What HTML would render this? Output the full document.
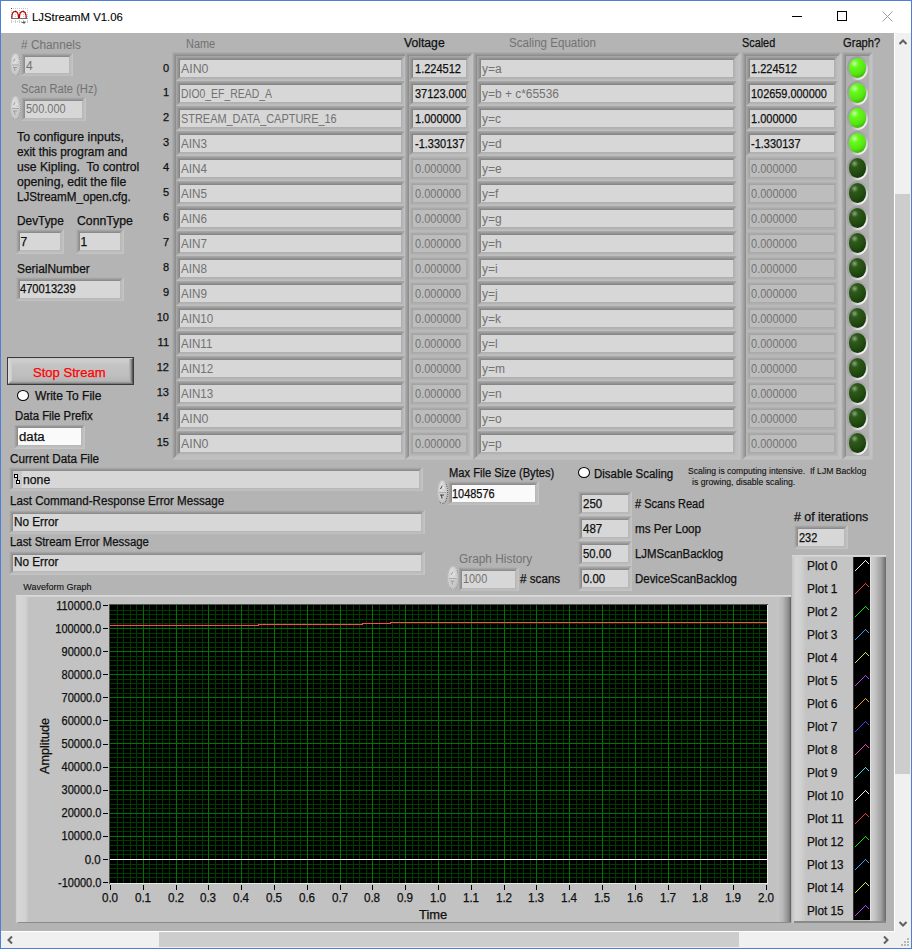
<!DOCTYPE html>
<html><head><meta charset="utf-8"><style>
html,body{margin:0;padding:0;width:912px;height:949px;overflow:hidden;background:#fff}
body>div,body>svg{position:absolute}
.f{height:100%;box-sizing:border-box}
.t{position:absolute;white-space:nowrap;line-height:1;font-family:"Liberation Sans",sans-serif;-webkit-text-stroke:0.25px currentColor}
</style></head><body>
<div style="left:0px;top:0px;width:912px;height:949px;background:#ffffff"></div>
<div style="left:1px;top:33px;width:893px;height:898px;background:#b4b4b4"></div>
<div style="left:895px;top:33px;width:16px;height:915px;background:#f0f0f0"></div>
<div style="left:1px;top:932px;width:910px;height:16px;background:#f0f0f0"></div>
<div style="left:895px;top:194px;width:15px;height:580px;background:#cdcdcd"></div>
<div style="left:159px;top:932px;width:580px;height:15px;background:#cdcdcd"></div>
<svg style="left:895px;top:33px" width="16" height="16"><path d="M4.5 11 L8 7.5 L11.5 11" stroke="#606060" stroke-width="2" fill="none"/></svg>
<svg style="left:895px;top:915px" width="16" height="16"><path d="M4.5 7 L8 10.5 L11.5 7" stroke="#606060" stroke-width="2" fill="none"/></svg>
<svg style="left:1px;top:932px" width="16" height="16"><path d="M11 4.5 L7.5 8 L11 11.5" stroke="#606060" stroke-width="2" fill="none"/></svg>
<svg style="left:878px;top:932px" width="16" height="16"><path d="M6 4.5 L9.5 8 L6 11.5" stroke="#606060" stroke-width="2" fill="none"/></svg>
<div style="left:907px;top:938px;width:2px;height:2px;background:#b8b8b8"></div>
<div style="left:904px;top:941px;width:2px;height:2px;background:#b8b8b8"></div>
<div style="left:907px;top:941px;width:2px;height:2px;background:#b8b8b8"></div>
<div style="left:901px;top:944px;width:2px;height:2px;background:#b8b8b8"></div>
<div style="left:904px;top:944px;width:2px;height:2px;background:#b8b8b8"></div>
<div style="left:907px;top:944px;width:2px;height:2px;background:#b8b8b8"></div>
<div style="left:0px;top:0px;width:912px;height:1px;background:#4a80d6"></div>
<div style="left:0px;top:948px;width:912px;height:1px;background:#4a80d6"></div>
<div style="left:0px;top:0px;width:1px;height:949px;background:#4a80d6"></div>
<div style="left:911px;top:0px;width:1px;height:949px;background:#4a80d6"></div>
<svg style="left:10px;top:7px" width="19" height="19">
<g stroke="#c8c8c8" stroke-width="1" stroke-dasharray="1 1" shape-rendering="crispEdges">
<line x1="1.5" y1="1" x2="1.5" y2="17"/><line x1="5.5" y1="1" x2="5.5" y2="17"/><line x1="9.5" y1="1" x2="9.5" y2="17"/><line x1="13.5" y1="1" x2="13.5" y2="17"/><line x1="17.5" y1="1" x2="17.5" y2="17"/>
<line x1="1" y1="1.5" x2="18" y2="1.5"/><line x1="1" y1="5.5" x2="18" y2="5.5"/><line x1="1" y1="14.5" x2="18" y2="14.5"/>
</g>
<rect x="1" y="1" width="1" height="1" fill="#404040"/>
<line x1="1" y1="11.5" x2="17.5" y2="11.5" stroke="#707070" stroke-width="1"/>
<path d="M1.8 11 C1.8 2.2 8.6 2.2 8.6 11 M9.4 11 C9.4 2.2 16.2 2.2 16.2 11" stroke="#c00000" stroke-width="1.25" fill="none"/>
<path d="M8.1 11 L9 8.5 L9.9 11 Z" fill="#c00000"/>
<path d="M11.5 15.5 L15 15.5 M13.5 14 L15 15.5 L13.5 17" stroke="#505050" stroke-width="0.9" fill="none"/>
</svg>
<div class="t" style="left:31.60px;top:11.00px;font-size:11.7px;color:#000000;transform-origin:0 0;transform:scaleX(0.9706);-webkit-text-stroke:0.1px #000;">LJStreamM V1.06</div>
<div style="left:792px;top:16px;width:10px;height:1px;background:#000"></div>
<div style="left:837px;top:11px;width:10px;height:10px;box-sizing:border-box;border:1px solid #000"></div>
<svg style="left:882px;top:11px" width="11" height="11"><path d="M0.5 0.5 L10.5 10.5 M10.5 0.5 L0.5 10.5" stroke="#a0a0a0" stroke-width="1" fill="none"/></svg>
<div class="t" style="left:21.30px;top:39.00px;font-size:12px;color:#727272;transform-origin:0 0;transform:scaleX(0.9868);-webkit-text-stroke:0;"># Channels</div>
<div style="left:21px;top:53px;width:52px;height:23px"><div class="f" style="border-style:solid;border-width:1px 1px 1px 1px;border-color:#b0b0b0 #c4c4c4 #c0c0c0 #b0b0b0"><div class="f" style="border-style:solid;border-width:1px 1px 1px 1px;border-color:#a4a4a4 #c0c0c0 #bcbcbc #a4a4a4"><div class="f" style="border-style:solid;border-width:1px 1px 1px 1px;border-color:#989898 #bcbcbc #b8b8b8 #989898"><div class="f" style="border-style:solid;border-width:1px 1px 0 1px;border-color:#8c8c8c #b8b8b8 transparent #8c8c8c"><div class="f" style="background:#d7d7d7"></div></div></div></div></div></div>
<div style="left:10px;top:53px;width:11px;height:23px;border-radius:50%;box-sizing:border-box;border-width:1px;border-style:solid dotted dotted solid;border-color:#c4c4c4 #8e8e8e #8e8e8e #bcbcbc;background:radial-gradient(ellipse at 40% 30%, #e2e2e2 0%, #cdcdcd 50%, #b8b8b8 100%)"></div>
<svg style="left:10px;top:53px" width="11" height="23"><line x1="2" y1="11.0" x2="9" y2="11.0" stroke="#dadada" stroke-width="1"/><line x1="2" y1="12.0" x2="9" y2="12.0" stroke="#a8a8a8" stroke-width="1"/><path d="M3.5 8.5 L5.5 5.0" stroke="#9a9a9a" fill="none" stroke-width="1"/><path d="M5.5 5.0 L7.5 8.5" stroke="#e8e8e8" fill="none" stroke-width="1"/><path d="M3.0 14.5 L7.0 14.5 M4.5 14.5 L5.0 18.0" stroke="#9a9a9a" fill="none" stroke-width="1"/></svg>
<div class="t" style="left:26.00px;top:60.00px;font-size:12px;color:#727272;transform-origin:0 0;-webkit-text-stroke:0;">4</div>
<div class="t" style="left:21.30px;top:83.00px;font-size:12px;color:#727272;transform-origin:0 0;transform:scaleX(0.9287);-webkit-text-stroke:0;">Scan Rate (Hz)</div>
<div style="left:21px;top:97px;width:65px;height:24px"><div class="f" style="border-style:solid;border-width:1px 1px 1px 1px;border-color:#b0b0b0 #c4c4c4 #c0c0c0 #b0b0b0"><div class="f" style="border-style:solid;border-width:1px 1px 1px 1px;border-color:#a4a4a4 #c0c0c0 #bcbcbc #a4a4a4"><div class="f" style="border-style:solid;border-width:1px 1px 1px 1px;border-color:#989898 #bcbcbc #b8b8b8 #989898"><div class="f" style="border-style:solid;border-width:1px 1px 0 1px;border-color:#8c8c8c #b8b8b8 transparent #8c8c8c"><div class="f" style="background:#d7d7d7"></div></div></div></div></div></div>
<div style="left:10px;top:96px;width:11px;height:24px;border-radius:50%;box-sizing:border-box;border-width:1px;border-style:solid dotted dotted solid;border-color:#c4c4c4 #8e8e8e #8e8e8e #bcbcbc;background:radial-gradient(ellipse at 40% 30%, #e2e2e2 0%, #cdcdcd 50%, #b8b8b8 100%)"></div>
<svg style="left:10px;top:96px" width="11" height="24"><line x1="2" y1="11.5" x2="9" y2="11.5" stroke="#dadada" stroke-width="1"/><line x1="2" y1="12.5" x2="9" y2="12.5" stroke="#a8a8a8" stroke-width="1"/><path d="M3.5 9.0 L5.5 5.5" stroke="#9a9a9a" fill="none" stroke-width="1"/><path d="M5.5 5.5 L7.5 9.0" stroke="#e8e8e8" fill="none" stroke-width="1"/><path d="M3.0 15.0 L7.0 15.0 M4.5 15.0 L5.0 18.5" stroke="#9a9a9a" fill="none" stroke-width="1"/></svg>
<div class="t" style="left:25.70px;top:103.00px;font-size:12px;color:#727272;transform-origin:0 0;transform:scaleX(0.9124);-webkit-text-stroke:0;">500.000</div>
<div class="t" style="left:16.70px;top:131.00px;font-size:12px;color:#101010;transform-origin:0 0;transform:scaleX(1.0264);">To configure inputs,</div>
<div class="t" style="left:16.70px;top:146.00px;font-size:12px;color:#101010;transform-origin:0 0;transform:scaleX(0.9835);">exit this program and</div>
<div class="t" style="left:16.70px;top:161.00px;font-size:12px;color:#101010;transform-origin:0 0;transform:scaleX(1.0141);">use Kipling.&nbsp; To control</div>
<div class="t" style="left:16.70px;top:176.00px;font-size:12px;color:#101010;transform-origin:0 0;transform:scaleX(1.0168);">opening, edit the file</div>
<div class="t" style="left:16.70px;top:191.00px;font-size:12px;color:#101010;transform-origin:0 0;transform:scaleX(0.9693);">LJStreamM_open.cfg.</div>
<div class="t" style="left:16.70px;top:215.00px;font-size:12px;color:#101010;transform-origin:0 0;transform:scaleX(0.9884);">DevType</div>
<div class="t" style="left:76.70px;top:215.00px;font-size:12px;color:#101010;transform-origin:0 0;transform:scaleX(1.0201);">ConnType</div>
<div style="left:16px;top:229px;width:48px;height:25px"><div class="f" style="border-style:solid;border-width:1px 1px 1px 1px;border-color:#b0b0b0 #c4c4c4 #c4c4c4 #b0b0b0"><div class="f" style="border-style:solid;border-width:1px 1px 1px 1px;border-color:#a4a4a4 #c0c0c0 #c0c0c0 #a4a4a4"><div class="f" style="border-style:solid;border-width:1px 1px 1px 1px;border-color:#989898 #bcbcbc #bcbcbc #989898"><div class="f" style="border-style:solid;border-width:1px 1px 1px 1px;border-color:#8c8c8c #b8b8b8 #b8b8b8 #8c8c8c"><div class="f" style="background:#d7d7d7"></div></div></div></div></div></div>
<div style="left:76px;top:229px;width:48px;height:25px"><div class="f" style="border-style:solid;border-width:1px 1px 1px 1px;border-color:#b0b0b0 #c4c4c4 #c4c4c4 #b0b0b0"><div class="f" style="border-style:solid;border-width:1px 1px 1px 1px;border-color:#a4a4a4 #c0c0c0 #c0c0c0 #a4a4a4"><div class="f" style="border-style:solid;border-width:1px 1px 1px 1px;border-color:#989898 #bcbcbc #bcbcbc #989898"><div class="f" style="border-style:solid;border-width:1px 1px 1px 1px;border-color:#8c8c8c #b8b8b8 #b8b8b8 #8c8c8c"><div class="f" style="background:#d7d7d7"></div></div></div></div></div></div>
<div class="t" style="left:20.60px;top:236.00px;font-size:12px;color:#101010;transform-origin:0 0;">7</div>
<div class="t" style="left:80.60px;top:236.00px;font-size:12px;color:#101010;transform-origin:0 0;">1</div>
<div class="t" style="left:16.70px;top:263.00px;font-size:12px;color:#101010;transform-origin:0 0;transform:scaleX(0.9925);">SerialNumber</div>
<div style="left:16px;top:277px;width:108px;height:24px"><div class="f" style="border-style:solid;border-width:1px 1px 1px 1px;border-color:#b0b0b0 #c4c4c4 #c0c0c0 #b0b0b0"><div class="f" style="border-style:solid;border-width:1px 1px 1px 1px;border-color:#a4a4a4 #c0c0c0 #bcbcbc #a4a4a4"><div class="f" style="border-style:solid;border-width:1px 1px 1px 1px;border-color:#989898 #bcbcbc #b8b8b8 #989898"><div class="f" style="border-style:solid;border-width:1px 1px 0 1px;border-color:#8c8c8c #b8b8b8 transparent #8c8c8c"><div class="f" style="background:#d7d7d7"></div></div></div></div></div></div>
<div class="t" style="left:19.90px;top:283.00px;font-size:12px;color:#101010;transform-origin:0 0;transform:scaleX(0.9259);">470013239</div>
<div style="left:7px;top:357px;width:127px;height:28px;background:#3a3a3a"></div>
<div style="left:8px;top:358px;width:125px;height:26px"><div class="f" style="border-style:solid;border-width:1px 1px 1px 1px;border-color:#c8c8c8 #5a5a5a #7a7a7a #dadada"><div class="f" style="border-style:solid;border-width:0 1px 1px 1px;border-color:transparent #808080 #9a9a9a #d6d6d6"><div class="f" style="border-style:solid;border-width:0 1px 1px 1px;border-color:transparent #a0a0a0 #acacac #d2d2d2"><div class="f" style="border-style:solid;border-width:0 1px 0 1px;border-color:transparent #b4b4b4 transparent #cccccc"><div class="f" style="background:linear-gradient(#d0d0d0,#c4c4c4 30%,#bebebe 75%,#b6b6b6)"></div></div></div></div></div></div>
<div class="t" style="left:33.30px;top:367.00px;font-size:12.5px;color:#ff0000;transform-origin:0 0;transform:scaleX(1.0439);">Stop Stream</div>
<div style="left:17px;top:390px;width:12px;height:11px;box-sizing:border-box;border:1px solid #000;border-radius:50%;background:#fff"></div>
<div class="t" style="left:34.70px;top:390.00px;font-size:12px;color:#101010;transform-origin:0 0;transform:scaleX(1.0038);">Write To File</div>
<div class="t" style="left:14.90px;top:410.00px;font-size:12px;color:#101010;transform-origin:0 0;transform:scaleX(0.9458);">Data File Prefix</div>
<div style="left:14px;top:425px;width:71px;height:24px"><div class="f" style="border-style:solid;border-width:1px 1px 1px 1px;border-color:#a4a4a4 #c4c4c4 #c4c4c4 #b0b0b0"><div class="f" style="border-style:solid;border-width:1px 1px 1px 1px;border-color:#989898 #c0c0c0 #c0c0c0 #a4a4a4"><div class="f" style="border-style:solid;border-width:1px 1px 1px 1px;border-color:#8c8c8c #bcbcbc #bcbcbc #989898"><div class="f" style="border-style:solid;border-width:0 1px 1px 1px;border-color:transparent #b8b8b8 #b8b8b8 #8c8c8c"><div class="f" style="background:#fafafa"></div></div></div></div></div></div>
<div class="t" style="left:19.00px;top:431.00px;font-size:12px;color:#101010;transform-origin:0 0;transform:scaleX(1.0983);">data</div>
<div class="t" style="left:9.70px;top:453.00px;font-size:12px;color:#101010;transform-origin:0 0;transform:scaleX(0.9743);">Current Data File</div>
<div style="left:9px;top:467px;width:414px;height:24px"><div class="f" style="border-style:solid;border-width:1px 1px 1px 1px;border-color:#b0b0b0 #c4c4c4 #c0c0c0 #b0b0b0"><div class="f" style="border-style:solid;border-width:1px 1px 1px 1px;border-color:#a4a4a4 #c0c0c0 #bcbcbc #a4a4a4"><div class="f" style="border-style:solid;border-width:1px 1px 1px 1px;border-color:#989898 #bcbcbc #b8b8b8 #989898"><div class="f" style="border-style:solid;border-width:1px 1px 0 1px;border-color:#8c8c8c #b8b8b8 transparent #8c8c8c"><div class="f" style="background:#d7d7d7"></div></div></div></div></div></div>
<div style="left:13px;top:471px;width:9px;height:17px;background:#c8c8c8"></div>
<div style="left:14px;top:474px;width:4px;height:4px;background:#000"></div>
<div style="left:15px;top:475px;width:2px;height:2px;background:#fff"></div>
<div style="left:16px;top:480px;width:4px;height:4px;background:#000"></div>
<div style="left:17px;top:481px;width:2px;height:2px;background:#fff"></div>
<div style="left:17px;top:478px;width:1px;height:2px;background:#000"></div>
<div class="t" style="left:22.90px;top:474.00px;font-size:12px;color:#101010;transform-origin:0 0;transform:scaleX(1.0187);">none</div>
<div class="t" style="left:9.70px;top:495.00px;font-size:12px;color:#101010;transform-origin:0 0;transform:scaleX(0.9673);">Last Command-Response Error Message</div>
<div style="left:9px;top:510px;width:416px;height:24px"><div class="f" style="border-style:solid;border-width:1px 1px 1px 1px;border-color:#b0b0b0 #c4c4c4 #c0c0c0 #b0b0b0"><div class="f" style="border-style:solid;border-width:1px 1px 1px 1px;border-color:#a4a4a4 #c0c0c0 #bcbcbc #a4a4a4"><div class="f" style="border-style:solid;border-width:1px 1px 1px 1px;border-color:#989898 #bcbcbc #b8b8b8 #989898"><div class="f" style="border-style:solid;border-width:1px 1px 0 1px;border-color:#8c8c8c #b8b8b8 transparent #8c8c8c"><div class="f" style="background:#d7d7d7"></div></div></div></div></div></div>
<div class="t" style="left:13.90px;top:516.00px;font-size:12px;color:#101010;transform-origin:0 0;transform:scaleX(0.9791);">No Error</div>
<div class="t" style="left:9.70px;top:536.00px;font-size:12px;color:#101010;transform-origin:0 0;transform:scaleX(0.9468);">Last Stream Error Message</div>
<div style="left:9px;top:551px;width:416px;height:24px"><div class="f" style="border-style:solid;border-width:1px 1px 1px 1px;border-color:#b0b0b0 #c4c4c4 #c4c4c4 #b0b0b0"><div class="f" style="border-style:solid;border-width:1px 1px 1px 1px;border-color:#a4a4a4 #c0c0c0 #c0c0c0 #a4a4a4"><div class="f" style="border-style:solid;border-width:1px 1px 1px 1px;border-color:#989898 #bcbcbc #bcbcbc #989898"><div class="f" style="border-style:solid;border-width:1px 1px 1px 1px;border-color:#8c8c8c #b8b8b8 #b8b8b8 #8c8c8c"><div class="f" style="background:#d7d7d7"></div></div></div></div></div></div>
<div class="t" style="left:13.90px;top:556.00px;font-size:12px;color:#101010;transform-origin:0 0;transform:scaleX(0.9791);">No Error</div>
<div class="t" style="left:185.90px;top:38.00px;font-size:12px;color:#727272;transform-origin:0 0;transform:scaleX(0.9125);-webkit-text-stroke:0;">Name</div>
<div class="t" style="left:404.30px;top:37.00px;font-size:12px;color:#101010;transform-origin:0 0;transform:scaleX(1.0162);">Voltage</div>
<div class="t" style="left:508.90px;top:37.00px;font-size:12px;color:#727272;transform-origin:0 0;transform:scaleX(0.9661);-webkit-text-stroke:0;">Scaling Equation</div>
<div class="t" style="left:741.80px;top:37.00px;font-size:12px;color:#101010;transform-origin:0 0;transform:scaleX(0.9046);">Scaled</div>
<div class="t" style="left:843.00px;top:37.00px;font-size:12px;color:#101010;transform-origin:0 0;transform:scaleX(0.9288);">Graph?</div>
<div style="left:172px;top:52px;width:237px;height:408px"><div class="f" style="border-style:solid;border-width:1px 1px 1px 1px;border-color:#acacac #bcbcbc #bcbcbc #acacac"><div class="f" style="border-style:solid;border-width:1px 1px 1px 1px;border-color:#a2a2a2 #c2c2c2 #c2c2c2 #a2a2a2"><div class="f" style="border-style:solid;border-width:1px 1px 1px 1px;border-color:#989898 #c0c0c0 #c0c0c0 #989898"><div class="f" style="border-style:solid;border-width:1px 1px 1px 1px;border-color:#8e8e8e #bebebe #bebebe #8e8e8e"><div class="f" style="background:#b4b4b4"></div></div></div></div></div></div>
<div style="left:405px;top:52px;width:69px;height:408px"><div class="f" style="border-style:solid;border-width:1px 1px 1px 1px;border-color:#acacac #bcbcbc #bcbcbc #acacac"><div class="f" style="border-style:solid;border-width:1px 1px 1px 1px;border-color:#a2a2a2 #c2c2c2 #c2c2c2 #a2a2a2"><div class="f" style="border-style:solid;border-width:1px 1px 1px 1px;border-color:#989898 #c0c0c0 #c0c0c0 #989898"><div class="f" style="border-style:solid;border-width:1px 1px 1px 1px;border-color:#8e8e8e #bebebe #bebebe #8e8e8e"><div class="f" style="background:#b4b4b4"></div></div></div></div></div></div>
<div style="left:473px;top:52px;width:268px;height:408px"><div class="f" style="border-style:solid;border-width:1px 1px 1px 1px;border-color:#acacac #bcbcbc #bcbcbc #acacac"><div class="f" style="border-style:solid;border-width:1px 1px 1px 1px;border-color:#a2a2a2 #c2c2c2 #c2c2c2 #a2a2a2"><div class="f" style="border-style:solid;border-width:1px 1px 1px 1px;border-color:#989898 #c0c0c0 #c0c0c0 #989898"><div class="f" style="border-style:solid;border-width:1px 1px 1px 1px;border-color:#8e8e8e #bebebe #bebebe #8e8e8e"><div class="f" style="background:#b4b4b4"></div></div></div></div></div></div>
<div style="left:742px;top:52px;width:100px;height:408px"><div class="f" style="border-style:solid;border-width:1px 1px 1px 1px;border-color:#acacac #bcbcbc #bcbcbc #acacac"><div class="f" style="border-style:solid;border-width:1px 1px 1px 1px;border-color:#a2a2a2 #c2c2c2 #c2c2c2 #a2a2a2"><div class="f" style="border-style:solid;border-width:1px 1px 1px 1px;border-color:#989898 #c0c0c0 #c0c0c0 #989898"><div class="f" style="border-style:solid;border-width:1px 1px 1px 1px;border-color:#8e8e8e #bebebe #bebebe #8e8e8e"><div class="f" style="background:#b4b4b4"></div></div></div></div></div></div>
<div style="left:176px;top:56px;width:229px;height:25px"><div class="f" style="border-style:solid;border-width:1px 1px 1px 1px;border-color:#a6a6a6 #bebebe #bebebe #a6a6a6"><div class="f" style="border-style:solid;border-width:1px 1px 1px 1px;border-color:#9c9c9c #bababa #bababa #9c9c9c"><div class="f" style="border-style:solid;border-width:1px 1px 1px 1px;border-color:#929292 #b4b4b4 #b4b4b4 #929292"><div class="f" style="border-style:solid;border-width:1px 1px 1px 1px;border-color:#868686 #b0b0b0 #b0b0b0 #868686"><div class="f" style="background:#d7d7d7"></div></div></div></div></div></div>
<div style="left:176px;top:81px;width:229px;height:25px"><div class="f" style="border-style:solid;border-width:1px 1px 1px 1px;border-color:#a6a6a6 #bebebe #bebebe #a6a6a6"><div class="f" style="border-style:solid;border-width:1px 1px 1px 1px;border-color:#9c9c9c #bababa #bababa #9c9c9c"><div class="f" style="border-style:solid;border-width:1px 1px 1px 1px;border-color:#929292 #b4b4b4 #b4b4b4 #929292"><div class="f" style="border-style:solid;border-width:1px 1px 1px 1px;border-color:#868686 #b0b0b0 #b0b0b0 #868686"><div class="f" style="background:#d7d7d7"></div></div></div></div></div></div>
<div style="left:176px;top:106px;width:229px;height:25px"><div class="f" style="border-style:solid;border-width:1px 1px 1px 1px;border-color:#a6a6a6 #bebebe #bebebe #a6a6a6"><div class="f" style="border-style:solid;border-width:1px 1px 1px 1px;border-color:#9c9c9c #bababa #bababa #9c9c9c"><div class="f" style="border-style:solid;border-width:1px 1px 1px 1px;border-color:#929292 #b4b4b4 #b4b4b4 #929292"><div class="f" style="border-style:solid;border-width:1px 1px 1px 1px;border-color:#868686 #b0b0b0 #b0b0b0 #868686"><div class="f" style="background:#d7d7d7"></div></div></div></div></div></div>
<div style="left:176px;top:131px;width:229px;height:25px"><div class="f" style="border-style:solid;border-width:1px 1px 1px 1px;border-color:#a6a6a6 #bebebe #bebebe #a6a6a6"><div class="f" style="border-style:solid;border-width:1px 1px 1px 1px;border-color:#9c9c9c #bababa #bababa #9c9c9c"><div class="f" style="border-style:solid;border-width:1px 1px 1px 1px;border-color:#929292 #b4b4b4 #b4b4b4 #929292"><div class="f" style="border-style:solid;border-width:1px 1px 1px 1px;border-color:#868686 #b0b0b0 #b0b0b0 #868686"><div class="f" style="background:#d7d7d7"></div></div></div></div></div></div>
<div style="left:176px;top:156px;width:229px;height:25px"><div class="f" style="border-style:solid;border-width:1px 1px 1px 1px;border-color:#a6a6a6 #bebebe #bebebe #a6a6a6"><div class="f" style="border-style:solid;border-width:1px 1px 1px 1px;border-color:#9c9c9c #bababa #bababa #9c9c9c"><div class="f" style="border-style:solid;border-width:1px 1px 1px 1px;border-color:#929292 #b4b4b4 #b4b4b4 #929292"><div class="f" style="border-style:solid;border-width:1px 1px 1px 1px;border-color:#868686 #b0b0b0 #b0b0b0 #868686"><div class="f" style="background:#d7d7d7"></div></div></div></div></div></div>
<div style="left:176px;top:181px;width:229px;height:25px"><div class="f" style="border-style:solid;border-width:1px 1px 1px 1px;border-color:#a6a6a6 #bebebe #bebebe #a6a6a6"><div class="f" style="border-style:solid;border-width:1px 1px 1px 1px;border-color:#9c9c9c #bababa #bababa #9c9c9c"><div class="f" style="border-style:solid;border-width:1px 1px 1px 1px;border-color:#929292 #b4b4b4 #b4b4b4 #929292"><div class="f" style="border-style:solid;border-width:1px 1px 1px 1px;border-color:#868686 #b0b0b0 #b0b0b0 #868686"><div class="f" style="background:#d7d7d7"></div></div></div></div></div></div>
<div style="left:176px;top:206px;width:229px;height:25px"><div class="f" style="border-style:solid;border-width:1px 1px 1px 1px;border-color:#a6a6a6 #bebebe #bebebe #a6a6a6"><div class="f" style="border-style:solid;border-width:1px 1px 1px 1px;border-color:#9c9c9c #bababa #bababa #9c9c9c"><div class="f" style="border-style:solid;border-width:1px 1px 1px 1px;border-color:#929292 #b4b4b4 #b4b4b4 #929292"><div class="f" style="border-style:solid;border-width:1px 1px 1px 1px;border-color:#868686 #b0b0b0 #b0b0b0 #868686"><div class="f" style="background:#d7d7d7"></div></div></div></div></div></div>
<div style="left:176px;top:231px;width:229px;height:25px"><div class="f" style="border-style:solid;border-width:1px 1px 1px 1px;border-color:#a6a6a6 #bebebe #bebebe #a6a6a6"><div class="f" style="border-style:solid;border-width:1px 1px 1px 1px;border-color:#9c9c9c #bababa #bababa #9c9c9c"><div class="f" style="border-style:solid;border-width:1px 1px 1px 1px;border-color:#929292 #b4b4b4 #b4b4b4 #929292"><div class="f" style="border-style:solid;border-width:1px 1px 1px 1px;border-color:#868686 #b0b0b0 #b0b0b0 #868686"><div class="f" style="background:#d7d7d7"></div></div></div></div></div></div>
<div style="left:176px;top:256px;width:229px;height:25px"><div class="f" style="border-style:solid;border-width:1px 1px 1px 1px;border-color:#a6a6a6 #bebebe #bebebe #a6a6a6"><div class="f" style="border-style:solid;border-width:1px 1px 1px 1px;border-color:#9c9c9c #bababa #bababa #9c9c9c"><div class="f" style="border-style:solid;border-width:1px 1px 1px 1px;border-color:#929292 #b4b4b4 #b4b4b4 #929292"><div class="f" style="border-style:solid;border-width:1px 1px 1px 1px;border-color:#868686 #b0b0b0 #b0b0b0 #868686"><div class="f" style="background:#d7d7d7"></div></div></div></div></div></div>
<div style="left:176px;top:281px;width:229px;height:25px"><div class="f" style="border-style:solid;border-width:1px 1px 1px 1px;border-color:#a6a6a6 #bebebe #bebebe #a6a6a6"><div class="f" style="border-style:solid;border-width:1px 1px 1px 1px;border-color:#9c9c9c #bababa #bababa #9c9c9c"><div class="f" style="border-style:solid;border-width:1px 1px 1px 1px;border-color:#929292 #b4b4b4 #b4b4b4 #929292"><div class="f" style="border-style:solid;border-width:1px 1px 1px 1px;border-color:#868686 #b0b0b0 #b0b0b0 #868686"><div class="f" style="background:#d7d7d7"></div></div></div></div></div></div>
<div style="left:176px;top:306px;width:229px;height:25px"><div class="f" style="border-style:solid;border-width:1px 1px 1px 1px;border-color:#a6a6a6 #bebebe #bebebe #a6a6a6"><div class="f" style="border-style:solid;border-width:1px 1px 1px 1px;border-color:#9c9c9c #bababa #bababa #9c9c9c"><div class="f" style="border-style:solid;border-width:1px 1px 1px 1px;border-color:#929292 #b4b4b4 #b4b4b4 #929292"><div class="f" style="border-style:solid;border-width:1px 1px 1px 1px;border-color:#868686 #b0b0b0 #b0b0b0 #868686"><div class="f" style="background:#d7d7d7"></div></div></div></div></div></div>
<div style="left:176px;top:331px;width:229px;height:25px"><div class="f" style="border-style:solid;border-width:1px 1px 1px 1px;border-color:#a6a6a6 #bebebe #bebebe #a6a6a6"><div class="f" style="border-style:solid;border-width:1px 1px 1px 1px;border-color:#9c9c9c #bababa #bababa #9c9c9c"><div class="f" style="border-style:solid;border-width:1px 1px 1px 1px;border-color:#929292 #b4b4b4 #b4b4b4 #929292"><div class="f" style="border-style:solid;border-width:1px 1px 1px 1px;border-color:#868686 #b0b0b0 #b0b0b0 #868686"><div class="f" style="background:#d7d7d7"></div></div></div></div></div></div>
<div style="left:176px;top:356px;width:229px;height:25px"><div class="f" style="border-style:solid;border-width:1px 1px 1px 1px;border-color:#a6a6a6 #bebebe #bebebe #a6a6a6"><div class="f" style="border-style:solid;border-width:1px 1px 1px 1px;border-color:#9c9c9c #bababa #bababa #9c9c9c"><div class="f" style="border-style:solid;border-width:1px 1px 1px 1px;border-color:#929292 #b4b4b4 #b4b4b4 #929292"><div class="f" style="border-style:solid;border-width:1px 1px 1px 1px;border-color:#868686 #b0b0b0 #b0b0b0 #868686"><div class="f" style="background:#d7d7d7"></div></div></div></div></div></div>
<div style="left:176px;top:381px;width:229px;height:25px"><div class="f" style="border-style:solid;border-width:1px 1px 1px 1px;border-color:#a6a6a6 #bebebe #bebebe #a6a6a6"><div class="f" style="border-style:solid;border-width:1px 1px 1px 1px;border-color:#9c9c9c #bababa #bababa #9c9c9c"><div class="f" style="border-style:solid;border-width:1px 1px 1px 1px;border-color:#929292 #b4b4b4 #b4b4b4 #929292"><div class="f" style="border-style:solid;border-width:1px 1px 1px 1px;border-color:#868686 #b0b0b0 #b0b0b0 #868686"><div class="f" style="background:#d7d7d7"></div></div></div></div></div></div>
<div style="left:176px;top:406px;width:229px;height:25px"><div class="f" style="border-style:solid;border-width:1px 1px 1px 1px;border-color:#a6a6a6 #bebebe #bebebe #a6a6a6"><div class="f" style="border-style:solid;border-width:1px 1px 1px 1px;border-color:#9c9c9c #bababa #bababa #9c9c9c"><div class="f" style="border-style:solid;border-width:1px 1px 1px 1px;border-color:#929292 #b4b4b4 #b4b4b4 #929292"><div class="f" style="border-style:solid;border-width:1px 1px 1px 1px;border-color:#868686 #b0b0b0 #b0b0b0 #868686"><div class="f" style="background:#d7d7d7"></div></div></div></div></div></div>
<div style="left:176px;top:431px;width:229px;height:25px"><div class="f" style="border-style:solid;border-width:1px 1px 1px 1px;border-color:#a6a6a6 #bebebe #bebebe #a6a6a6"><div class="f" style="border-style:solid;border-width:1px 1px 1px 1px;border-color:#9c9c9c #bababa #bababa #9c9c9c"><div class="f" style="border-style:solid;border-width:1px 1px 1px 1px;border-color:#929292 #b4b4b4 #b4b4b4 #929292"><div class="f" style="border-style:solid;border-width:1px 1px 1px 1px;border-color:#868686 #b0b0b0 #b0b0b0 #868686"><div class="f" style="background:#d7d7d7"></div></div></div></div></div></div>
<div style="left:409px;top:56px;width:61px;height:25px"><div class="f" style="border-style:solid;border-width:1px 1px 1px 1px;border-color:#a6a6a6 #bebebe #bebebe #a6a6a6"><div class="f" style="border-style:solid;border-width:1px 1px 1px 1px;border-color:#9c9c9c #bababa #bababa #9c9c9c"><div class="f" style="border-style:solid;border-width:1px 1px 1px 1px;border-color:#929292 #b4b4b4 #b4b4b4 #929292"><div class="f" style="border-style:solid;border-width:1px 1px 1px 1px;border-color:#868686 #b0b0b0 #b0b0b0 #868686"><div class="f" style="background:#d7d7d7"></div></div></div></div></div></div>
<div style="left:409px;top:81px;width:61px;height:25px"><div class="f" style="border-style:solid;border-width:1px 1px 1px 1px;border-color:#a6a6a6 #bebebe #bebebe #a6a6a6"><div class="f" style="border-style:solid;border-width:1px 1px 1px 1px;border-color:#9c9c9c #bababa #bababa #9c9c9c"><div class="f" style="border-style:solid;border-width:1px 1px 1px 1px;border-color:#929292 #b4b4b4 #b4b4b4 #929292"><div class="f" style="border-style:solid;border-width:1px 1px 1px 1px;border-color:#868686 #b0b0b0 #b0b0b0 #868686"><div class="f" style="background:#d7d7d7"></div></div></div></div></div></div>
<div style="left:409px;top:106px;width:61px;height:25px"><div class="f" style="border-style:solid;border-width:1px 1px 1px 1px;border-color:#a6a6a6 #bebebe #bebebe #a6a6a6"><div class="f" style="border-style:solid;border-width:1px 1px 1px 1px;border-color:#9c9c9c #bababa #bababa #9c9c9c"><div class="f" style="border-style:solid;border-width:1px 1px 1px 1px;border-color:#929292 #b4b4b4 #b4b4b4 #929292"><div class="f" style="border-style:solid;border-width:1px 1px 1px 1px;border-color:#868686 #b0b0b0 #b0b0b0 #868686"><div class="f" style="background:#d7d7d7"></div></div></div></div></div></div>
<div style="left:409px;top:131px;width:61px;height:25px"><div class="f" style="border-style:solid;border-width:1px 1px 1px 1px;border-color:#a6a6a6 #bebebe #bebebe #a6a6a6"><div class="f" style="border-style:solid;border-width:1px 1px 1px 1px;border-color:#9c9c9c #bababa #bababa #9c9c9c"><div class="f" style="border-style:solid;border-width:1px 1px 1px 1px;border-color:#929292 #b4b4b4 #b4b4b4 #929292"><div class="f" style="border-style:solid;border-width:1px 1px 1px 1px;border-color:#868686 #b0b0b0 #b0b0b0 #868686"><div class="f" style="background:#d7d7d7"></div></div></div></div></div></div>
<div style="left:409px;top:156px;width:61px;height:25px"><div class="f" style="border-style:solid;border-width:1px 1px 1px 1px;border-color:#b8b8b8 #b8b8b8 #b8b8b8 #b8b8b8"><div class="f" style="border-style:solid;border-width:1px 1px 1px 1px;border-color:#b2b2b2 #b2b2b2 #b2b2b2 #b2b2b2"><div class="f" style="border-style:solid;border-width:1px 1px 1px 1px;border-color:#aaaaaa #aeaeae #aeaeae #aaaaaa"><div class="f" style="border-style:solid;border-width:1px 1px 1px 1px;border-color:#a4a4a4 #aaaaaa #aaaaaa #a4a4a4"><div class="f" style="background:#bdbdbd"></div></div></div></div></div></div>
<div style="left:409px;top:181px;width:61px;height:25px"><div class="f" style="border-style:solid;border-width:1px 1px 1px 1px;border-color:#b8b8b8 #b8b8b8 #b8b8b8 #b8b8b8"><div class="f" style="border-style:solid;border-width:1px 1px 1px 1px;border-color:#b2b2b2 #b2b2b2 #b2b2b2 #b2b2b2"><div class="f" style="border-style:solid;border-width:1px 1px 1px 1px;border-color:#aaaaaa #aeaeae #aeaeae #aaaaaa"><div class="f" style="border-style:solid;border-width:1px 1px 1px 1px;border-color:#a4a4a4 #aaaaaa #aaaaaa #a4a4a4"><div class="f" style="background:#bdbdbd"></div></div></div></div></div></div>
<div style="left:409px;top:206px;width:61px;height:25px"><div class="f" style="border-style:solid;border-width:1px 1px 1px 1px;border-color:#b8b8b8 #b8b8b8 #b8b8b8 #b8b8b8"><div class="f" style="border-style:solid;border-width:1px 1px 1px 1px;border-color:#b2b2b2 #b2b2b2 #b2b2b2 #b2b2b2"><div class="f" style="border-style:solid;border-width:1px 1px 1px 1px;border-color:#aaaaaa #aeaeae #aeaeae #aaaaaa"><div class="f" style="border-style:solid;border-width:1px 1px 1px 1px;border-color:#a4a4a4 #aaaaaa #aaaaaa #a4a4a4"><div class="f" style="background:#bdbdbd"></div></div></div></div></div></div>
<div style="left:409px;top:231px;width:61px;height:25px"><div class="f" style="border-style:solid;border-width:1px 1px 1px 1px;border-color:#b8b8b8 #b8b8b8 #b8b8b8 #b8b8b8"><div class="f" style="border-style:solid;border-width:1px 1px 1px 1px;border-color:#b2b2b2 #b2b2b2 #b2b2b2 #b2b2b2"><div class="f" style="border-style:solid;border-width:1px 1px 1px 1px;border-color:#aaaaaa #aeaeae #aeaeae #aaaaaa"><div class="f" style="border-style:solid;border-width:1px 1px 1px 1px;border-color:#a4a4a4 #aaaaaa #aaaaaa #a4a4a4"><div class="f" style="background:#bdbdbd"></div></div></div></div></div></div>
<div style="left:409px;top:256px;width:61px;height:25px"><div class="f" style="border-style:solid;border-width:1px 1px 1px 1px;border-color:#b8b8b8 #b8b8b8 #b8b8b8 #b8b8b8"><div class="f" style="border-style:solid;border-width:1px 1px 1px 1px;border-color:#b2b2b2 #b2b2b2 #b2b2b2 #b2b2b2"><div class="f" style="border-style:solid;border-width:1px 1px 1px 1px;border-color:#aaaaaa #aeaeae #aeaeae #aaaaaa"><div class="f" style="border-style:solid;border-width:1px 1px 1px 1px;border-color:#a4a4a4 #aaaaaa #aaaaaa #a4a4a4"><div class="f" style="background:#bdbdbd"></div></div></div></div></div></div>
<div style="left:409px;top:281px;width:61px;height:25px"><div class="f" style="border-style:solid;border-width:1px 1px 1px 1px;border-color:#b8b8b8 #b8b8b8 #b8b8b8 #b8b8b8"><div class="f" style="border-style:solid;border-width:1px 1px 1px 1px;border-color:#b2b2b2 #b2b2b2 #b2b2b2 #b2b2b2"><div class="f" style="border-style:solid;border-width:1px 1px 1px 1px;border-color:#aaaaaa #aeaeae #aeaeae #aaaaaa"><div class="f" style="border-style:solid;border-width:1px 1px 1px 1px;border-color:#a4a4a4 #aaaaaa #aaaaaa #a4a4a4"><div class="f" style="background:#bdbdbd"></div></div></div></div></div></div>
<div style="left:409px;top:306px;width:61px;height:25px"><div class="f" style="border-style:solid;border-width:1px 1px 1px 1px;border-color:#b8b8b8 #b8b8b8 #b8b8b8 #b8b8b8"><div class="f" style="border-style:solid;border-width:1px 1px 1px 1px;border-color:#b2b2b2 #b2b2b2 #b2b2b2 #b2b2b2"><div class="f" style="border-style:solid;border-width:1px 1px 1px 1px;border-color:#aaaaaa #aeaeae #aeaeae #aaaaaa"><div class="f" style="border-style:solid;border-width:1px 1px 1px 1px;border-color:#a4a4a4 #aaaaaa #aaaaaa #a4a4a4"><div class="f" style="background:#bdbdbd"></div></div></div></div></div></div>
<div style="left:409px;top:331px;width:61px;height:25px"><div class="f" style="border-style:solid;border-width:1px 1px 1px 1px;border-color:#b8b8b8 #b8b8b8 #b8b8b8 #b8b8b8"><div class="f" style="border-style:solid;border-width:1px 1px 1px 1px;border-color:#b2b2b2 #b2b2b2 #b2b2b2 #b2b2b2"><div class="f" style="border-style:solid;border-width:1px 1px 1px 1px;border-color:#aaaaaa #aeaeae #aeaeae #aaaaaa"><div class="f" style="border-style:solid;border-width:1px 1px 1px 1px;border-color:#a4a4a4 #aaaaaa #aaaaaa #a4a4a4"><div class="f" style="background:#bdbdbd"></div></div></div></div></div></div>
<div style="left:409px;top:356px;width:61px;height:25px"><div class="f" style="border-style:solid;border-width:1px 1px 1px 1px;border-color:#b8b8b8 #b8b8b8 #b8b8b8 #b8b8b8"><div class="f" style="border-style:solid;border-width:1px 1px 1px 1px;border-color:#b2b2b2 #b2b2b2 #b2b2b2 #b2b2b2"><div class="f" style="border-style:solid;border-width:1px 1px 1px 1px;border-color:#aaaaaa #aeaeae #aeaeae #aaaaaa"><div class="f" style="border-style:solid;border-width:1px 1px 1px 1px;border-color:#a4a4a4 #aaaaaa #aaaaaa #a4a4a4"><div class="f" style="background:#bdbdbd"></div></div></div></div></div></div>
<div style="left:409px;top:381px;width:61px;height:25px"><div class="f" style="border-style:solid;border-width:1px 1px 1px 1px;border-color:#b8b8b8 #b8b8b8 #b8b8b8 #b8b8b8"><div class="f" style="border-style:solid;border-width:1px 1px 1px 1px;border-color:#b2b2b2 #b2b2b2 #b2b2b2 #b2b2b2"><div class="f" style="border-style:solid;border-width:1px 1px 1px 1px;border-color:#aaaaaa #aeaeae #aeaeae #aaaaaa"><div class="f" style="border-style:solid;border-width:1px 1px 1px 1px;border-color:#a4a4a4 #aaaaaa #aaaaaa #a4a4a4"><div class="f" style="background:#bdbdbd"></div></div></div></div></div></div>
<div style="left:409px;top:406px;width:61px;height:25px"><div class="f" style="border-style:solid;border-width:1px 1px 1px 1px;border-color:#b8b8b8 #b8b8b8 #b8b8b8 #b8b8b8"><div class="f" style="border-style:solid;border-width:1px 1px 1px 1px;border-color:#b2b2b2 #b2b2b2 #b2b2b2 #b2b2b2"><div class="f" style="border-style:solid;border-width:1px 1px 1px 1px;border-color:#aaaaaa #aeaeae #aeaeae #aaaaaa"><div class="f" style="border-style:solid;border-width:1px 1px 1px 1px;border-color:#a4a4a4 #aaaaaa #aaaaaa #a4a4a4"><div class="f" style="background:#bdbdbd"></div></div></div></div></div></div>
<div style="left:409px;top:431px;width:61px;height:25px"><div class="f" style="border-style:solid;border-width:1px 1px 1px 1px;border-color:#b8b8b8 #b8b8b8 #b8b8b8 #b8b8b8"><div class="f" style="border-style:solid;border-width:1px 1px 1px 1px;border-color:#b2b2b2 #b2b2b2 #b2b2b2 #b2b2b2"><div class="f" style="border-style:solid;border-width:1px 1px 1px 1px;border-color:#aaaaaa #aeaeae #aeaeae #aaaaaa"><div class="f" style="border-style:solid;border-width:1px 1px 1px 1px;border-color:#a4a4a4 #aaaaaa #aaaaaa #a4a4a4"><div class="f" style="background:#bdbdbd"></div></div></div></div></div></div>
<div style="left:477px;top:56px;width:260px;height:25px"><div class="f" style="border-style:solid;border-width:1px 1px 1px 1px;border-color:#a6a6a6 #bebebe #bebebe #a6a6a6"><div class="f" style="border-style:solid;border-width:1px 1px 1px 1px;border-color:#9c9c9c #bababa #bababa #9c9c9c"><div class="f" style="border-style:solid;border-width:1px 1px 1px 1px;border-color:#929292 #b4b4b4 #b4b4b4 #929292"><div class="f" style="border-style:solid;border-width:1px 1px 1px 1px;border-color:#868686 #b0b0b0 #b0b0b0 #868686"><div class="f" style="background:#d7d7d7"></div></div></div></div></div></div>
<div style="left:477px;top:81px;width:260px;height:25px"><div class="f" style="border-style:solid;border-width:1px 1px 1px 1px;border-color:#a6a6a6 #bebebe #bebebe #a6a6a6"><div class="f" style="border-style:solid;border-width:1px 1px 1px 1px;border-color:#9c9c9c #bababa #bababa #9c9c9c"><div class="f" style="border-style:solid;border-width:1px 1px 1px 1px;border-color:#929292 #b4b4b4 #b4b4b4 #929292"><div class="f" style="border-style:solid;border-width:1px 1px 1px 1px;border-color:#868686 #b0b0b0 #b0b0b0 #868686"><div class="f" style="background:#d7d7d7"></div></div></div></div></div></div>
<div style="left:477px;top:106px;width:260px;height:25px"><div class="f" style="border-style:solid;border-width:1px 1px 1px 1px;border-color:#a6a6a6 #bebebe #bebebe #a6a6a6"><div class="f" style="border-style:solid;border-width:1px 1px 1px 1px;border-color:#9c9c9c #bababa #bababa #9c9c9c"><div class="f" style="border-style:solid;border-width:1px 1px 1px 1px;border-color:#929292 #b4b4b4 #b4b4b4 #929292"><div class="f" style="border-style:solid;border-width:1px 1px 1px 1px;border-color:#868686 #b0b0b0 #b0b0b0 #868686"><div class="f" style="background:#d7d7d7"></div></div></div></div></div></div>
<div style="left:477px;top:131px;width:260px;height:25px"><div class="f" style="border-style:solid;border-width:1px 1px 1px 1px;border-color:#a6a6a6 #bebebe #bebebe #a6a6a6"><div class="f" style="border-style:solid;border-width:1px 1px 1px 1px;border-color:#9c9c9c #bababa #bababa #9c9c9c"><div class="f" style="border-style:solid;border-width:1px 1px 1px 1px;border-color:#929292 #b4b4b4 #b4b4b4 #929292"><div class="f" style="border-style:solid;border-width:1px 1px 1px 1px;border-color:#868686 #b0b0b0 #b0b0b0 #868686"><div class="f" style="background:#d7d7d7"></div></div></div></div></div></div>
<div style="left:477px;top:156px;width:260px;height:25px"><div class="f" style="border-style:solid;border-width:1px 1px 1px 1px;border-color:#a6a6a6 #bebebe #bebebe #a6a6a6"><div class="f" style="border-style:solid;border-width:1px 1px 1px 1px;border-color:#9c9c9c #bababa #bababa #9c9c9c"><div class="f" style="border-style:solid;border-width:1px 1px 1px 1px;border-color:#929292 #b4b4b4 #b4b4b4 #929292"><div class="f" style="border-style:solid;border-width:1px 1px 1px 1px;border-color:#868686 #b0b0b0 #b0b0b0 #868686"><div class="f" style="background:#d7d7d7"></div></div></div></div></div></div>
<div style="left:477px;top:181px;width:260px;height:25px"><div class="f" style="border-style:solid;border-width:1px 1px 1px 1px;border-color:#a6a6a6 #bebebe #bebebe #a6a6a6"><div class="f" style="border-style:solid;border-width:1px 1px 1px 1px;border-color:#9c9c9c #bababa #bababa #9c9c9c"><div class="f" style="border-style:solid;border-width:1px 1px 1px 1px;border-color:#929292 #b4b4b4 #b4b4b4 #929292"><div class="f" style="border-style:solid;border-width:1px 1px 1px 1px;border-color:#868686 #b0b0b0 #b0b0b0 #868686"><div class="f" style="background:#d7d7d7"></div></div></div></div></div></div>
<div style="left:477px;top:206px;width:260px;height:25px"><div class="f" style="border-style:solid;border-width:1px 1px 1px 1px;border-color:#a6a6a6 #bebebe #bebebe #a6a6a6"><div class="f" style="border-style:solid;border-width:1px 1px 1px 1px;border-color:#9c9c9c #bababa #bababa #9c9c9c"><div class="f" style="border-style:solid;border-width:1px 1px 1px 1px;border-color:#929292 #b4b4b4 #b4b4b4 #929292"><div class="f" style="border-style:solid;border-width:1px 1px 1px 1px;border-color:#868686 #b0b0b0 #b0b0b0 #868686"><div class="f" style="background:#d7d7d7"></div></div></div></div></div></div>
<div style="left:477px;top:231px;width:260px;height:25px"><div class="f" style="border-style:solid;border-width:1px 1px 1px 1px;border-color:#a6a6a6 #bebebe #bebebe #a6a6a6"><div class="f" style="border-style:solid;border-width:1px 1px 1px 1px;border-color:#9c9c9c #bababa #bababa #9c9c9c"><div class="f" style="border-style:solid;border-width:1px 1px 1px 1px;border-color:#929292 #b4b4b4 #b4b4b4 #929292"><div class="f" style="border-style:solid;border-width:1px 1px 1px 1px;border-color:#868686 #b0b0b0 #b0b0b0 #868686"><div class="f" style="background:#d7d7d7"></div></div></div></div></div></div>
<div style="left:477px;top:256px;width:260px;height:25px"><div class="f" style="border-style:solid;border-width:1px 1px 1px 1px;border-color:#a6a6a6 #bebebe #bebebe #a6a6a6"><div class="f" style="border-style:solid;border-width:1px 1px 1px 1px;border-color:#9c9c9c #bababa #bababa #9c9c9c"><div class="f" style="border-style:solid;border-width:1px 1px 1px 1px;border-color:#929292 #b4b4b4 #b4b4b4 #929292"><div class="f" style="border-style:solid;border-width:1px 1px 1px 1px;border-color:#868686 #b0b0b0 #b0b0b0 #868686"><div class="f" style="background:#d7d7d7"></div></div></div></div></div></div>
<div style="left:477px;top:281px;width:260px;height:25px"><div class="f" style="border-style:solid;border-width:1px 1px 1px 1px;border-color:#a6a6a6 #bebebe #bebebe #a6a6a6"><div class="f" style="border-style:solid;border-width:1px 1px 1px 1px;border-color:#9c9c9c #bababa #bababa #9c9c9c"><div class="f" style="border-style:solid;border-width:1px 1px 1px 1px;border-color:#929292 #b4b4b4 #b4b4b4 #929292"><div class="f" style="border-style:solid;border-width:1px 1px 1px 1px;border-color:#868686 #b0b0b0 #b0b0b0 #868686"><div class="f" style="background:#d7d7d7"></div></div></div></div></div></div>
<div style="left:477px;top:306px;width:260px;height:25px"><div class="f" style="border-style:solid;border-width:1px 1px 1px 1px;border-color:#a6a6a6 #bebebe #bebebe #a6a6a6"><div class="f" style="border-style:solid;border-width:1px 1px 1px 1px;border-color:#9c9c9c #bababa #bababa #9c9c9c"><div class="f" style="border-style:solid;border-width:1px 1px 1px 1px;border-color:#929292 #b4b4b4 #b4b4b4 #929292"><div class="f" style="border-style:solid;border-width:1px 1px 1px 1px;border-color:#868686 #b0b0b0 #b0b0b0 #868686"><div class="f" style="background:#d7d7d7"></div></div></div></div></div></div>
<div style="left:477px;top:331px;width:260px;height:25px"><div class="f" style="border-style:solid;border-width:1px 1px 1px 1px;border-color:#a6a6a6 #bebebe #bebebe #a6a6a6"><div class="f" style="border-style:solid;border-width:1px 1px 1px 1px;border-color:#9c9c9c #bababa #bababa #9c9c9c"><div class="f" style="border-style:solid;border-width:1px 1px 1px 1px;border-color:#929292 #b4b4b4 #b4b4b4 #929292"><div class="f" style="border-style:solid;border-width:1px 1px 1px 1px;border-color:#868686 #b0b0b0 #b0b0b0 #868686"><div class="f" style="background:#d7d7d7"></div></div></div></div></div></div>
<div style="left:477px;top:356px;width:260px;height:25px"><div class="f" style="border-style:solid;border-width:1px 1px 1px 1px;border-color:#a6a6a6 #bebebe #bebebe #a6a6a6"><div class="f" style="border-style:solid;border-width:1px 1px 1px 1px;border-color:#9c9c9c #bababa #bababa #9c9c9c"><div class="f" style="border-style:solid;border-width:1px 1px 1px 1px;border-color:#929292 #b4b4b4 #b4b4b4 #929292"><div class="f" style="border-style:solid;border-width:1px 1px 1px 1px;border-color:#868686 #b0b0b0 #b0b0b0 #868686"><div class="f" style="background:#d7d7d7"></div></div></div></div></div></div>
<div style="left:477px;top:381px;width:260px;height:25px"><div class="f" style="border-style:solid;border-width:1px 1px 1px 1px;border-color:#a6a6a6 #bebebe #bebebe #a6a6a6"><div class="f" style="border-style:solid;border-width:1px 1px 1px 1px;border-color:#9c9c9c #bababa #bababa #9c9c9c"><div class="f" style="border-style:solid;border-width:1px 1px 1px 1px;border-color:#929292 #b4b4b4 #b4b4b4 #929292"><div class="f" style="border-style:solid;border-width:1px 1px 1px 1px;border-color:#868686 #b0b0b0 #b0b0b0 #868686"><div class="f" style="background:#d7d7d7"></div></div></div></div></div></div>
<div style="left:477px;top:406px;width:260px;height:25px"><div class="f" style="border-style:solid;border-width:1px 1px 1px 1px;border-color:#a6a6a6 #bebebe #bebebe #a6a6a6"><div class="f" style="border-style:solid;border-width:1px 1px 1px 1px;border-color:#9c9c9c #bababa #bababa #9c9c9c"><div class="f" style="border-style:solid;border-width:1px 1px 1px 1px;border-color:#929292 #b4b4b4 #b4b4b4 #929292"><div class="f" style="border-style:solid;border-width:1px 1px 1px 1px;border-color:#868686 #b0b0b0 #b0b0b0 #868686"><div class="f" style="background:#d7d7d7"></div></div></div></div></div></div>
<div style="left:477px;top:431px;width:260px;height:25px"><div class="f" style="border-style:solid;border-width:1px 1px 1px 1px;border-color:#a6a6a6 #bebebe #bebebe #a6a6a6"><div class="f" style="border-style:solid;border-width:1px 1px 1px 1px;border-color:#9c9c9c #bababa #bababa #9c9c9c"><div class="f" style="border-style:solid;border-width:1px 1px 1px 1px;border-color:#929292 #b4b4b4 #b4b4b4 #929292"><div class="f" style="border-style:solid;border-width:1px 1px 1px 1px;border-color:#868686 #b0b0b0 #b0b0b0 #868686"><div class="f" style="background:#d7d7d7"></div></div></div></div></div></div>
<div style="left:746px;top:56px;width:92px;height:25px"><div class="f" style="border-style:solid;border-width:1px 1px 1px 1px;border-color:#a6a6a6 #bebebe #bebebe #a6a6a6"><div class="f" style="border-style:solid;border-width:1px 1px 1px 1px;border-color:#9c9c9c #bababa #bababa #9c9c9c"><div class="f" style="border-style:solid;border-width:1px 1px 1px 1px;border-color:#929292 #b4b4b4 #b4b4b4 #929292"><div class="f" style="border-style:solid;border-width:1px 1px 1px 1px;border-color:#868686 #b0b0b0 #b0b0b0 #868686"><div class="f" style="background:#d7d7d7"></div></div></div></div></div></div>
<div style="left:746px;top:81px;width:92px;height:25px"><div class="f" style="border-style:solid;border-width:1px 1px 1px 1px;border-color:#a6a6a6 #bebebe #bebebe #a6a6a6"><div class="f" style="border-style:solid;border-width:1px 1px 1px 1px;border-color:#9c9c9c #bababa #bababa #9c9c9c"><div class="f" style="border-style:solid;border-width:1px 1px 1px 1px;border-color:#929292 #b4b4b4 #b4b4b4 #929292"><div class="f" style="border-style:solid;border-width:1px 1px 1px 1px;border-color:#868686 #b0b0b0 #b0b0b0 #868686"><div class="f" style="background:#d7d7d7"></div></div></div></div></div></div>
<div style="left:746px;top:106px;width:92px;height:25px"><div class="f" style="border-style:solid;border-width:1px 1px 1px 1px;border-color:#a6a6a6 #bebebe #bebebe #a6a6a6"><div class="f" style="border-style:solid;border-width:1px 1px 1px 1px;border-color:#9c9c9c #bababa #bababa #9c9c9c"><div class="f" style="border-style:solid;border-width:1px 1px 1px 1px;border-color:#929292 #b4b4b4 #b4b4b4 #929292"><div class="f" style="border-style:solid;border-width:1px 1px 1px 1px;border-color:#868686 #b0b0b0 #b0b0b0 #868686"><div class="f" style="background:#d7d7d7"></div></div></div></div></div></div>
<div style="left:746px;top:131px;width:92px;height:25px"><div class="f" style="border-style:solid;border-width:1px 1px 1px 1px;border-color:#a6a6a6 #bebebe #bebebe #a6a6a6"><div class="f" style="border-style:solid;border-width:1px 1px 1px 1px;border-color:#9c9c9c #bababa #bababa #9c9c9c"><div class="f" style="border-style:solid;border-width:1px 1px 1px 1px;border-color:#929292 #b4b4b4 #b4b4b4 #929292"><div class="f" style="border-style:solid;border-width:1px 1px 1px 1px;border-color:#868686 #b0b0b0 #b0b0b0 #868686"><div class="f" style="background:#d7d7d7"></div></div></div></div></div></div>
<div style="left:746px;top:156px;width:92px;height:25px"><div class="f" style="border-style:solid;border-width:1px 1px 1px 1px;border-color:#b8b8b8 #b8b8b8 #b8b8b8 #b8b8b8"><div class="f" style="border-style:solid;border-width:1px 1px 1px 1px;border-color:#b2b2b2 #b2b2b2 #b2b2b2 #b2b2b2"><div class="f" style="border-style:solid;border-width:1px 1px 1px 1px;border-color:#aaaaaa #aeaeae #aeaeae #aaaaaa"><div class="f" style="border-style:solid;border-width:1px 1px 1px 1px;border-color:#a4a4a4 #aaaaaa #aaaaaa #a4a4a4"><div class="f" style="background:#bdbdbd"></div></div></div></div></div></div>
<div style="left:746px;top:181px;width:92px;height:25px"><div class="f" style="border-style:solid;border-width:1px 1px 1px 1px;border-color:#b8b8b8 #b8b8b8 #b8b8b8 #b8b8b8"><div class="f" style="border-style:solid;border-width:1px 1px 1px 1px;border-color:#b2b2b2 #b2b2b2 #b2b2b2 #b2b2b2"><div class="f" style="border-style:solid;border-width:1px 1px 1px 1px;border-color:#aaaaaa #aeaeae #aeaeae #aaaaaa"><div class="f" style="border-style:solid;border-width:1px 1px 1px 1px;border-color:#a4a4a4 #aaaaaa #aaaaaa #a4a4a4"><div class="f" style="background:#bdbdbd"></div></div></div></div></div></div>
<div style="left:746px;top:206px;width:92px;height:25px"><div class="f" style="border-style:solid;border-width:1px 1px 1px 1px;border-color:#b8b8b8 #b8b8b8 #b8b8b8 #b8b8b8"><div class="f" style="border-style:solid;border-width:1px 1px 1px 1px;border-color:#b2b2b2 #b2b2b2 #b2b2b2 #b2b2b2"><div class="f" style="border-style:solid;border-width:1px 1px 1px 1px;border-color:#aaaaaa #aeaeae #aeaeae #aaaaaa"><div class="f" style="border-style:solid;border-width:1px 1px 1px 1px;border-color:#a4a4a4 #aaaaaa #aaaaaa #a4a4a4"><div class="f" style="background:#bdbdbd"></div></div></div></div></div></div>
<div style="left:746px;top:231px;width:92px;height:25px"><div class="f" style="border-style:solid;border-width:1px 1px 1px 1px;border-color:#b8b8b8 #b8b8b8 #b8b8b8 #b8b8b8"><div class="f" style="border-style:solid;border-width:1px 1px 1px 1px;border-color:#b2b2b2 #b2b2b2 #b2b2b2 #b2b2b2"><div class="f" style="border-style:solid;border-width:1px 1px 1px 1px;border-color:#aaaaaa #aeaeae #aeaeae #aaaaaa"><div class="f" style="border-style:solid;border-width:1px 1px 1px 1px;border-color:#a4a4a4 #aaaaaa #aaaaaa #a4a4a4"><div class="f" style="background:#bdbdbd"></div></div></div></div></div></div>
<div style="left:746px;top:256px;width:92px;height:25px"><div class="f" style="border-style:solid;border-width:1px 1px 1px 1px;border-color:#b8b8b8 #b8b8b8 #b8b8b8 #b8b8b8"><div class="f" style="border-style:solid;border-width:1px 1px 1px 1px;border-color:#b2b2b2 #b2b2b2 #b2b2b2 #b2b2b2"><div class="f" style="border-style:solid;border-width:1px 1px 1px 1px;border-color:#aaaaaa #aeaeae #aeaeae #aaaaaa"><div class="f" style="border-style:solid;border-width:1px 1px 1px 1px;border-color:#a4a4a4 #aaaaaa #aaaaaa #a4a4a4"><div class="f" style="background:#bdbdbd"></div></div></div></div></div></div>
<div style="left:746px;top:281px;width:92px;height:25px"><div class="f" style="border-style:solid;border-width:1px 1px 1px 1px;border-color:#b8b8b8 #b8b8b8 #b8b8b8 #b8b8b8"><div class="f" style="border-style:solid;border-width:1px 1px 1px 1px;border-color:#b2b2b2 #b2b2b2 #b2b2b2 #b2b2b2"><div class="f" style="border-style:solid;border-width:1px 1px 1px 1px;border-color:#aaaaaa #aeaeae #aeaeae #aaaaaa"><div class="f" style="border-style:solid;border-width:1px 1px 1px 1px;border-color:#a4a4a4 #aaaaaa #aaaaaa #a4a4a4"><div class="f" style="background:#bdbdbd"></div></div></div></div></div></div>
<div style="left:746px;top:306px;width:92px;height:25px"><div class="f" style="border-style:solid;border-width:1px 1px 1px 1px;border-color:#b8b8b8 #b8b8b8 #b8b8b8 #b8b8b8"><div class="f" style="border-style:solid;border-width:1px 1px 1px 1px;border-color:#b2b2b2 #b2b2b2 #b2b2b2 #b2b2b2"><div class="f" style="border-style:solid;border-width:1px 1px 1px 1px;border-color:#aaaaaa #aeaeae #aeaeae #aaaaaa"><div class="f" style="border-style:solid;border-width:1px 1px 1px 1px;border-color:#a4a4a4 #aaaaaa #aaaaaa #a4a4a4"><div class="f" style="background:#bdbdbd"></div></div></div></div></div></div>
<div style="left:746px;top:331px;width:92px;height:25px"><div class="f" style="border-style:solid;border-width:1px 1px 1px 1px;border-color:#b8b8b8 #b8b8b8 #b8b8b8 #b8b8b8"><div class="f" style="border-style:solid;border-width:1px 1px 1px 1px;border-color:#b2b2b2 #b2b2b2 #b2b2b2 #b2b2b2"><div class="f" style="border-style:solid;border-width:1px 1px 1px 1px;border-color:#aaaaaa #aeaeae #aeaeae #aaaaaa"><div class="f" style="border-style:solid;border-width:1px 1px 1px 1px;border-color:#a4a4a4 #aaaaaa #aaaaaa #a4a4a4"><div class="f" style="background:#bdbdbd"></div></div></div></div></div></div>
<div style="left:746px;top:356px;width:92px;height:25px"><div class="f" style="border-style:solid;border-width:1px 1px 1px 1px;border-color:#b8b8b8 #b8b8b8 #b8b8b8 #b8b8b8"><div class="f" style="border-style:solid;border-width:1px 1px 1px 1px;border-color:#b2b2b2 #b2b2b2 #b2b2b2 #b2b2b2"><div class="f" style="border-style:solid;border-width:1px 1px 1px 1px;border-color:#aaaaaa #aeaeae #aeaeae #aaaaaa"><div class="f" style="border-style:solid;border-width:1px 1px 1px 1px;border-color:#a4a4a4 #aaaaaa #aaaaaa #a4a4a4"><div class="f" style="background:#bdbdbd"></div></div></div></div></div></div>
<div style="left:746px;top:381px;width:92px;height:25px"><div class="f" style="border-style:solid;border-width:1px 1px 1px 1px;border-color:#b8b8b8 #b8b8b8 #b8b8b8 #b8b8b8"><div class="f" style="border-style:solid;border-width:1px 1px 1px 1px;border-color:#b2b2b2 #b2b2b2 #b2b2b2 #b2b2b2"><div class="f" style="border-style:solid;border-width:1px 1px 1px 1px;border-color:#aaaaaa #aeaeae #aeaeae #aaaaaa"><div class="f" style="border-style:solid;border-width:1px 1px 1px 1px;border-color:#a4a4a4 #aaaaaa #aaaaaa #a4a4a4"><div class="f" style="background:#bdbdbd"></div></div></div></div></div></div>
<div style="left:746px;top:406px;width:92px;height:25px"><div class="f" style="border-style:solid;border-width:1px 1px 1px 1px;border-color:#b8b8b8 #b8b8b8 #b8b8b8 #b8b8b8"><div class="f" style="border-style:solid;border-width:1px 1px 1px 1px;border-color:#b2b2b2 #b2b2b2 #b2b2b2 #b2b2b2"><div class="f" style="border-style:solid;border-width:1px 1px 1px 1px;border-color:#aaaaaa #aeaeae #aeaeae #aaaaaa"><div class="f" style="border-style:solid;border-width:1px 1px 1px 1px;border-color:#a4a4a4 #aaaaaa #aaaaaa #a4a4a4"><div class="f" style="background:#bdbdbd"></div></div></div></div></div></div>
<div style="left:746px;top:431px;width:92px;height:25px"><div class="f" style="border-style:solid;border-width:1px 1px 1px 1px;border-color:#b8b8b8 #b8b8b8 #b8b8b8 #b8b8b8"><div class="f" style="border-style:solid;border-width:1px 1px 1px 1px;border-color:#b2b2b2 #b2b2b2 #b2b2b2 #b2b2b2"><div class="f" style="border-style:solid;border-width:1px 1px 1px 1px;border-color:#aaaaaa #aeaeae #aeaeae #aaaaaa"><div class="f" style="border-style:solid;border-width:1px 1px 1px 1px;border-color:#a4a4a4 #aaaaaa #aaaaaa #a4a4a4"><div class="f" style="background:#bdbdbd"></div></div></div></div></div></div>
<div style="left:842px;top:52px;width:31px;height:408px"><div class="f" style="border-style:solid;border-width:1px 1px 1px 1px;border-color:#acacac #bcbcbc #bcbcbc #acacac"><div class="f" style="border-style:solid;border-width:1px 1px 1px 1px;border-color:#a2a2a2 #c2c2c2 #c2c2c2 #a2a2a2"><div class="f" style="border-style:solid;border-width:1px 1px 1px 1px;border-color:#989898 #c0c0c0 #c0c0c0 #989898"><div class="f" style="border-style:solid;border-width:1px 1px 1px 1px;border-color:#8e8e8e #bebebe #bebebe #8e8e8e"><div class="f" style="background:#b0b0b0"></div></div></div></div></div></div>
<div class="t" style="right:743.00px;top:63.00px;font-size:11px;color:#101010;text-align:right;transform-origin:100% 0;">0</div>
<div style="left:180px;width:221px;overflow:hidden;top:60px;height:17px;"><div class="t" style="left:1.3px;top:3px;font-size:12px;color:#727272;transform-origin:0 0;transform:scaleX(1.0300);-webkit-text-stroke:0;">AIN0</div></div>
<div style="left:413px;width:53px;overflow:hidden;top:60px;height:17px;"><div class="t" style="left:2px;top:3px;font-size:12px;color:#101010;transform-origin:0 0;transform:scaleX(0.9190);">1.224512</div></div>
<div class="t" style="left:481.90px;top:63.00px;font-size:12px;color:#727272;transform-origin:0 0;-webkit-text-stroke:0;">y=a</div>
<div style="left:750px;width:84px;overflow:hidden;top:60px;height:17px;"><div class="t" style="left:1px;top:3px;font-size:12px;color:#101010;transform-origin:0 0;transform:scaleX(0.9190);">1.224512</div></div>
<div style="left:847px;top:56.0px;width:21px;height:24px;border-radius:50%;background:linear-gradient(135deg,#989898 0%,#aaaaaa 55%,#d4d4d4 72%,#ffffff 88%)"></div>
<div style="left:848.6px;top:58.0px;width:17.4px;height:19.6px;border-radius:50%;background:radial-gradient(circle at 33% 28%, #c0ffa0 0%, #66fa1c 22%, #56e410 58%, #2a8a06 100%)"></div>
<div class="t" style="right:743.00px;top:87.00px;font-size:11px;color:#101010;text-align:right;transform-origin:100% 0;">1</div>
<div style="left:180px;width:221px;overflow:hidden;top:85px;height:17px;"><div class="t" style="left:1.3px;top:3px;font-size:12px;color:#727272;transform-origin:0 0;transform:scaleX(0.8682);-webkit-text-stroke:0;">DIO0_EF_READ_A</div></div>
<div style="left:413px;width:53px;overflow:hidden;top:85px;height:17px;"><div class="t" style="left:2px;top:3px;font-size:12px;color:#101010;transform-origin:0 0;transform:scaleX(0.9161);">37123.000</div></div>
<div class="t" style="left:481.90px;top:88.00px;font-size:12px;color:#727272;transform-origin:0 0;transform:scaleX(0.9948);-webkit-text-stroke:0;">y=b + c*65536</div>
<div style="left:750px;width:84px;overflow:hidden;top:85px;height:17px;"><div class="t" style="left:1px;top:3px;font-size:12px;color:#101010;transform-origin:0 0;transform:scaleX(0.9094);">102659.000000</div></div>
<div style="left:847px;top:81.0px;width:21px;height:24px;border-radius:50%;background:linear-gradient(135deg,#989898 0%,#aaaaaa 55%,#d4d4d4 72%,#ffffff 88%)"></div>
<div style="left:848.6px;top:83.0px;width:17.4px;height:19.6px;border-radius:50%;background:radial-gradient(circle at 33% 28%, #c0ffa0 0%, #66fa1c 22%, #56e410 58%, #2a8a06 100%)"></div>
<div class="t" style="right:743.00px;top:112.00px;font-size:11px;color:#101010;text-align:right;transform-origin:100% 0;">2</div>
<div style="left:180px;width:221px;overflow:hidden;top:110px;height:17px;"><div class="t" style="left:1.3px;top:3px;font-size:12px;color:#727272;transform-origin:0 0;transform:scaleX(0.9108);-webkit-text-stroke:0;">STREAM_DATA_CAPTURE_16</div></div>
<div style="left:413px;width:53px;overflow:hidden;top:110px;height:17px;"><div class="t" style="left:2px;top:3px;font-size:12px;color:#101010;transform-origin:0 0;transform:scaleX(0.9190);">1.000000</div></div>
<div class="t" style="left:481.90px;top:113.00px;font-size:12px;color:#727272;transform-origin:0 0;-webkit-text-stroke:0;">y=c</div>
<div style="left:750px;width:84px;overflow:hidden;top:110px;height:17px;"><div class="t" style="left:1px;top:3px;font-size:12px;color:#101010;transform-origin:0 0;transform:scaleX(0.9190);">1.000000</div></div>
<div style="left:847px;top:106.0px;width:21px;height:24px;border-radius:50%;background:linear-gradient(135deg,#989898 0%,#aaaaaa 55%,#d4d4d4 72%,#ffffff 88%)"></div>
<div style="left:848.6px;top:108.0px;width:17.4px;height:19.6px;border-radius:50%;background:radial-gradient(circle at 33% 28%, #c0ffa0 0%, #66fa1c 22%, #56e410 58%, #2a8a06 100%)"></div>
<div class="t" style="right:743.00px;top:137.00px;font-size:11px;color:#101010;text-align:right;transform-origin:100% 0;">3</div>
<div style="left:180px;width:221px;overflow:hidden;top:135px;height:17px;"><div class="t" style="left:1.3px;top:3px;font-size:12px;color:#727272;transform-origin:0 0;transform:scaleX(0.9749);-webkit-text-stroke:0;">AIN3</div></div>
<div style="left:413px;width:53px;overflow:hidden;top:135px;height:17px;"><div class="t" style="left:2px;top:3px;font-size:12px;color:#101010;transform-origin:0 0;transform:scaleX(0.9172);">-1.330137</div></div>
<div class="t" style="left:481.90px;top:138.00px;font-size:12px;color:#727272;transform-origin:0 0;-webkit-text-stroke:0;">y=d</div>
<div style="left:750px;width:84px;overflow:hidden;top:135px;height:17px;"><div class="t" style="left:1px;top:3px;font-size:12px;color:#101010;transform-origin:0 0;transform:scaleX(0.9172);">-1.330137</div></div>
<div style="left:847px;top:131.0px;width:21px;height:24px;border-radius:50%;background:linear-gradient(135deg,#989898 0%,#aaaaaa 55%,#d4d4d4 72%,#ffffff 88%)"></div>
<div style="left:848.6px;top:133.0px;width:17.4px;height:19.6px;border-radius:50%;background:radial-gradient(circle at 33% 28%, #c0ffa0 0%, #66fa1c 22%, #56e410 58%, #2a8a06 100%)"></div>
<div class="t" style="right:743.00px;top:162.00px;font-size:11px;color:#101010;text-align:right;transform-origin:100% 0;">4</div>
<div style="left:180px;width:221px;overflow:hidden;top:160px;height:17px;"><div class="t" style="left:1.3px;top:3px;font-size:12px;color:#727272;transform-origin:0 0;transform:scaleX(0.9749);-webkit-text-stroke:0;">AIN4</div></div>
<div style="left:413px;width:53px;overflow:hidden;top:160px;height:17px;"><div class="t" style="left:2px;top:3px;font-size:12px;color:#727272;transform-origin:0 0;transform:scaleX(0.9190);-webkit-text-stroke:0;">0.000000</div></div>
<div class="t" style="left:481.90px;top:163.00px;font-size:12px;color:#727272;transform-origin:0 0;-webkit-text-stroke:0;">y=e</div>
<div style="left:750px;width:84px;overflow:hidden;top:160px;height:17px;"><div class="t" style="left:1px;top:3px;font-size:12px;color:#727272;transform-origin:0 0;transform:scaleX(0.9190);-webkit-text-stroke:0;">0.000000</div></div>
<div style="left:847px;top:156.0px;width:21px;height:24px;border-radius:50%;background:linear-gradient(135deg,#989898 0%,#aaaaaa 55%,#d4d4d4 72%,#ffffff 88%)"></div>
<div style="left:848.6px;top:158.0px;width:17.4px;height:19.6px;border-radius:50%;background:radial-gradient(circle at 33% 28%, #8aa880 0%, #2e5a1a 20%, #214a10 55%, #0e2805 100%)"></div>
<div class="t" style="right:743.00px;top:187.00px;font-size:11px;color:#101010;text-align:right;transform-origin:100% 0;">5</div>
<div style="left:180px;width:221px;overflow:hidden;top:185px;height:17px;"><div class="t" style="left:1.3px;top:3px;font-size:12px;color:#727272;transform-origin:0 0;transform:scaleX(0.9749);-webkit-text-stroke:0;">AIN5</div></div>
<div style="left:413px;width:53px;overflow:hidden;top:185px;height:17px;"><div class="t" style="left:2px;top:3px;font-size:12px;color:#727272;transform-origin:0 0;transform:scaleX(0.9190);-webkit-text-stroke:0;">0.000000</div></div>
<div class="t" style="left:481.90px;top:188.00px;font-size:12px;color:#727272;transform-origin:0 0;-webkit-text-stroke:0;">y=f</div>
<div style="left:750px;width:84px;overflow:hidden;top:185px;height:17px;"><div class="t" style="left:1px;top:3px;font-size:12px;color:#727272;transform-origin:0 0;transform:scaleX(0.9190);-webkit-text-stroke:0;">0.000000</div></div>
<div style="left:847px;top:181.0px;width:21px;height:24px;border-radius:50%;background:linear-gradient(135deg,#989898 0%,#aaaaaa 55%,#d4d4d4 72%,#ffffff 88%)"></div>
<div style="left:848.6px;top:183.0px;width:17.4px;height:19.6px;border-radius:50%;background:radial-gradient(circle at 33% 28%, #8aa880 0%, #2e5a1a 20%, #214a10 55%, #0e2805 100%)"></div>
<div class="t" style="right:743.00px;top:212.00px;font-size:11px;color:#101010;text-align:right;transform-origin:100% 0;">6</div>
<div style="left:180px;width:221px;overflow:hidden;top:210px;height:17px;"><div class="t" style="left:1.3px;top:3px;font-size:12px;color:#727272;transform-origin:0 0;transform:scaleX(0.9749);-webkit-text-stroke:0;">AIN6</div></div>
<div style="left:413px;width:53px;overflow:hidden;top:210px;height:17px;"><div class="t" style="left:2px;top:3px;font-size:12px;color:#727272;transform-origin:0 0;transform:scaleX(0.9190);-webkit-text-stroke:0;">0.000000</div></div>
<div class="t" style="left:481.90px;top:213.00px;font-size:12px;color:#727272;transform-origin:0 0;-webkit-text-stroke:0;">y=g</div>
<div style="left:750px;width:84px;overflow:hidden;top:210px;height:17px;"><div class="t" style="left:1px;top:3px;font-size:12px;color:#727272;transform-origin:0 0;transform:scaleX(0.9190);-webkit-text-stroke:0;">0.000000</div></div>
<div style="left:847px;top:206.0px;width:21px;height:24px;border-radius:50%;background:linear-gradient(135deg,#989898 0%,#aaaaaa 55%,#d4d4d4 72%,#ffffff 88%)"></div>
<div style="left:848.6px;top:208.0px;width:17.4px;height:19.6px;border-radius:50%;background:radial-gradient(circle at 33% 28%, #8aa880 0%, #2e5a1a 20%, #214a10 55%, #0e2805 100%)"></div>
<div class="t" style="right:743.00px;top:237.00px;font-size:11px;color:#101010;text-align:right;transform-origin:100% 0;">7</div>
<div style="left:180px;width:221px;overflow:hidden;top:235px;height:17px;"><div class="t" style="left:1.3px;top:3px;font-size:12px;color:#727272;transform-origin:0 0;transform:scaleX(0.9749);-webkit-text-stroke:0;">AIN7</div></div>
<div style="left:413px;width:53px;overflow:hidden;top:235px;height:17px;"><div class="t" style="left:2px;top:3px;font-size:12px;color:#727272;transform-origin:0 0;transform:scaleX(0.9190);-webkit-text-stroke:0;">0.000000</div></div>
<div class="t" style="left:481.90px;top:238.00px;font-size:12px;color:#727272;transform-origin:0 0;-webkit-text-stroke:0;">y=h</div>
<div style="left:750px;width:84px;overflow:hidden;top:235px;height:17px;"><div class="t" style="left:1px;top:3px;font-size:12px;color:#727272;transform-origin:0 0;transform:scaleX(0.9190);-webkit-text-stroke:0;">0.000000</div></div>
<div style="left:847px;top:231.0px;width:21px;height:24px;border-radius:50%;background:linear-gradient(135deg,#989898 0%,#aaaaaa 55%,#d4d4d4 72%,#ffffff 88%)"></div>
<div style="left:848.6px;top:233.0px;width:17.4px;height:19.6px;border-radius:50%;background:radial-gradient(circle at 33% 28%, #8aa880 0%, #2e5a1a 20%, #214a10 55%, #0e2805 100%)"></div>
<div class="t" style="right:743.00px;top:262.00px;font-size:11px;color:#101010;text-align:right;transform-origin:100% 0;">8</div>
<div style="left:180px;width:221px;overflow:hidden;top:260px;height:17px;"><div class="t" style="left:1.3px;top:3px;font-size:12px;color:#727272;transform-origin:0 0;transform:scaleX(0.9749);-webkit-text-stroke:0;">AIN8</div></div>
<div style="left:413px;width:53px;overflow:hidden;top:260px;height:17px;"><div class="t" style="left:2px;top:3px;font-size:12px;color:#727272;transform-origin:0 0;transform:scaleX(0.9190);-webkit-text-stroke:0;">0.000000</div></div>
<div class="t" style="left:481.90px;top:263.00px;font-size:12px;color:#727272;transform-origin:0 0;-webkit-text-stroke:0;">y=i</div>
<div style="left:750px;width:84px;overflow:hidden;top:260px;height:17px;"><div class="t" style="left:1px;top:3px;font-size:12px;color:#727272;transform-origin:0 0;transform:scaleX(0.9190);-webkit-text-stroke:0;">0.000000</div></div>
<div style="left:847px;top:256.0px;width:21px;height:24px;border-radius:50%;background:linear-gradient(135deg,#989898 0%,#aaaaaa 55%,#d4d4d4 72%,#ffffff 88%)"></div>
<div style="left:848.6px;top:258.0px;width:17.4px;height:19.6px;border-radius:50%;background:radial-gradient(circle at 33% 28%, #8aa880 0%, #2e5a1a 20%, #214a10 55%, #0e2805 100%)"></div>
<div class="t" style="right:743.00px;top:287.00px;font-size:11px;color:#101010;text-align:right;transform-origin:100% 0;">9</div>
<div style="left:180px;width:221px;overflow:hidden;top:285px;height:17px;"><div class="t" style="left:1.3px;top:3px;font-size:12px;color:#727272;transform-origin:0 0;transform:scaleX(0.9749);-webkit-text-stroke:0;">AIN9</div></div>
<div style="left:413px;width:53px;overflow:hidden;top:285px;height:17px;"><div class="t" style="left:2px;top:3px;font-size:12px;color:#727272;transform-origin:0 0;transform:scaleX(0.9190);-webkit-text-stroke:0;">0.000000</div></div>
<div class="t" style="left:481.90px;top:288.00px;font-size:12px;color:#727272;transform-origin:0 0;-webkit-text-stroke:0;">y=j</div>
<div style="left:750px;width:84px;overflow:hidden;top:285px;height:17px;"><div class="t" style="left:1px;top:3px;font-size:12px;color:#727272;transform-origin:0 0;transform:scaleX(0.9190);-webkit-text-stroke:0;">0.000000</div></div>
<div style="left:847px;top:281.0px;width:21px;height:24px;border-radius:50%;background:linear-gradient(135deg,#989898 0%,#aaaaaa 55%,#d4d4d4 72%,#ffffff 88%)"></div>
<div style="left:848.6px;top:283.0px;width:17.4px;height:19.6px;border-radius:50%;background:radial-gradient(circle at 33% 28%, #8aa880 0%, #2e5a1a 20%, #214a10 55%, #0e2805 100%)"></div>
<div class="t" style="right:743.00px;top:312.00px;font-size:11px;color:#101010;text-align:right;transform-origin:100% 0;">10</div>
<div style="left:180px;width:221px;overflow:hidden;top:310px;height:17px;"><div class="t" style="left:1.3px;top:3px;font-size:12px;color:#727272;transform-origin:0 0;transform:scaleX(0.9660);-webkit-text-stroke:0;">AIN10</div></div>
<div style="left:413px;width:53px;overflow:hidden;top:310px;height:17px;"><div class="t" style="left:2px;top:3px;font-size:12px;color:#727272;transform-origin:0 0;transform:scaleX(0.9190);-webkit-text-stroke:0;">0.000000</div></div>
<div class="t" style="left:481.90px;top:313.00px;font-size:12px;color:#727272;transform-origin:0 0;-webkit-text-stroke:0;">y=k</div>
<div style="left:750px;width:84px;overflow:hidden;top:310px;height:17px;"><div class="t" style="left:1px;top:3px;font-size:12px;color:#727272;transform-origin:0 0;transform:scaleX(0.9190);-webkit-text-stroke:0;">0.000000</div></div>
<div style="left:847px;top:306.0px;width:21px;height:24px;border-radius:50%;background:linear-gradient(135deg,#989898 0%,#aaaaaa 55%,#d4d4d4 72%,#ffffff 88%)"></div>
<div style="left:848.6px;top:308.0px;width:17.4px;height:19.6px;border-radius:50%;background:radial-gradient(circle at 33% 28%, #8aa880 0%, #2e5a1a 20%, #214a10 55%, #0e2805 100%)"></div>
<div class="t" style="right:743.00px;top:337.00px;font-size:11px;color:#101010;text-align:right;transform-origin:100% 0;">11</div>
<div style="left:180px;width:221px;overflow:hidden;top:335px;height:17px;"><div class="t" style="left:1.3px;top:3px;font-size:12px;color:#727272;transform-origin:0 0;transform:scaleX(0.9670);-webkit-text-stroke:0;">AIN11</div></div>
<div style="left:413px;width:53px;overflow:hidden;top:335px;height:17px;"><div class="t" style="left:2px;top:3px;font-size:12px;color:#727272;transform-origin:0 0;transform:scaleX(0.9190);-webkit-text-stroke:0;">0.000000</div></div>
<div class="t" style="left:481.90px;top:338.00px;font-size:12px;color:#727272;transform-origin:0 0;-webkit-text-stroke:0;">y=l</div>
<div style="left:750px;width:84px;overflow:hidden;top:335px;height:17px;"><div class="t" style="left:1px;top:3px;font-size:12px;color:#727272;transform-origin:0 0;transform:scaleX(0.9190);-webkit-text-stroke:0;">0.000000</div></div>
<div style="left:847px;top:331.0px;width:21px;height:24px;border-radius:50%;background:linear-gradient(135deg,#989898 0%,#aaaaaa 55%,#d4d4d4 72%,#ffffff 88%)"></div>
<div style="left:848.6px;top:333.0px;width:17.4px;height:19.6px;border-radius:50%;background:radial-gradient(circle at 33% 28%, #8aa880 0%, #2e5a1a 20%, #214a10 55%, #0e2805 100%)"></div>
<div class="t" style="right:743.00px;top:362.00px;font-size:11px;color:#101010;text-align:right;transform-origin:100% 0;">12</div>
<div style="left:180px;width:221px;overflow:hidden;top:360px;height:17px;"><div class="t" style="left:1.3px;top:3px;font-size:12px;color:#727272;transform-origin:0 0;transform:scaleX(0.9660);-webkit-text-stroke:0;">AIN12</div></div>
<div style="left:413px;width:53px;overflow:hidden;top:360px;height:17px;"><div class="t" style="left:2px;top:3px;font-size:12px;color:#727272;transform-origin:0 0;transform:scaleX(0.9190);-webkit-text-stroke:0;">0.000000</div></div>
<div class="t" style="left:481.90px;top:363.00px;font-size:12px;color:#727272;transform-origin:0 0;-webkit-text-stroke:0;">y=m</div>
<div style="left:750px;width:84px;overflow:hidden;top:360px;height:17px;"><div class="t" style="left:1px;top:3px;font-size:12px;color:#727272;transform-origin:0 0;transform:scaleX(0.9190);-webkit-text-stroke:0;">0.000000</div></div>
<div style="left:847px;top:356.0px;width:21px;height:24px;border-radius:50%;background:linear-gradient(135deg,#989898 0%,#aaaaaa 55%,#d4d4d4 72%,#ffffff 88%)"></div>
<div style="left:848.6px;top:358.0px;width:17.4px;height:19.6px;border-radius:50%;background:radial-gradient(circle at 33% 28%, #8aa880 0%, #2e5a1a 20%, #214a10 55%, #0e2805 100%)"></div>
<div class="t" style="right:743.00px;top:387.00px;font-size:11px;color:#101010;text-align:right;transform-origin:100% 0;">13</div>
<div style="left:180px;width:221px;overflow:hidden;top:385px;height:17px;"><div class="t" style="left:1.3px;top:3px;font-size:12px;color:#727272;transform-origin:0 0;transform:scaleX(0.9660);-webkit-text-stroke:0;">AIN13</div></div>
<div style="left:413px;width:53px;overflow:hidden;top:385px;height:17px;"><div class="t" style="left:2px;top:3px;font-size:12px;color:#727272;transform-origin:0 0;transform:scaleX(0.9190);-webkit-text-stroke:0;">0.000000</div></div>
<div class="t" style="left:481.90px;top:388.00px;font-size:12px;color:#727272;transform-origin:0 0;-webkit-text-stroke:0;">y=n</div>
<div style="left:750px;width:84px;overflow:hidden;top:385px;height:17px;"><div class="t" style="left:1px;top:3px;font-size:12px;color:#727272;transform-origin:0 0;transform:scaleX(0.9190);-webkit-text-stroke:0;">0.000000</div></div>
<div style="left:847px;top:381.0px;width:21px;height:24px;border-radius:50%;background:linear-gradient(135deg,#989898 0%,#aaaaaa 55%,#d4d4d4 72%,#ffffff 88%)"></div>
<div style="left:848.6px;top:383.0px;width:17.4px;height:19.6px;border-radius:50%;background:radial-gradient(circle at 33% 28%, #8aa880 0%, #2e5a1a 20%, #214a10 55%, #0e2805 100%)"></div>
<div class="t" style="right:743.00px;top:412.00px;font-size:11px;color:#101010;text-align:right;transform-origin:100% 0;">14</div>
<div style="left:180px;width:221px;overflow:hidden;top:410px;height:17px;"><div class="t" style="left:1.3px;top:3px;font-size:12px;color:#727272;transform-origin:0 0;transform:scaleX(1.0300);-webkit-text-stroke:0;">AIN0</div></div>
<div style="left:413px;width:53px;overflow:hidden;top:410px;height:17px;"><div class="t" style="left:2px;top:3px;font-size:12px;color:#727272;transform-origin:0 0;transform:scaleX(0.9190);-webkit-text-stroke:0;">0.000000</div></div>
<div class="t" style="left:481.90px;top:413.00px;font-size:12px;color:#727272;transform-origin:0 0;-webkit-text-stroke:0;">y=o</div>
<div style="left:750px;width:84px;overflow:hidden;top:410px;height:17px;"><div class="t" style="left:1px;top:3px;font-size:12px;color:#727272;transform-origin:0 0;transform:scaleX(0.9190);-webkit-text-stroke:0;">0.000000</div></div>
<div style="left:847px;top:406.0px;width:21px;height:24px;border-radius:50%;background:linear-gradient(135deg,#989898 0%,#aaaaaa 55%,#d4d4d4 72%,#ffffff 88%)"></div>
<div style="left:848.6px;top:408.0px;width:17.4px;height:19.6px;border-radius:50%;background:radial-gradient(circle at 33% 28%, #8aa880 0%, #2e5a1a 20%, #214a10 55%, #0e2805 100%)"></div>
<div class="t" style="right:743.00px;top:437.00px;font-size:11px;color:#101010;text-align:right;transform-origin:100% 0;">15</div>
<div style="left:180px;width:221px;overflow:hidden;top:435px;height:17px;"><div class="t" style="left:1.3px;top:3px;font-size:12px;color:#727272;transform-origin:0 0;transform:scaleX(1.0300);-webkit-text-stroke:0;">AIN0</div></div>
<div style="left:413px;width:53px;overflow:hidden;top:435px;height:17px;"><div class="t" style="left:2px;top:3px;font-size:12px;color:#727272;transform-origin:0 0;transform:scaleX(0.9190);-webkit-text-stroke:0;">0.000000</div></div>
<div class="t" style="left:481.90px;top:438.00px;font-size:12px;color:#727272;transform-origin:0 0;-webkit-text-stroke:0;">y=p</div>
<div style="left:750px;width:84px;overflow:hidden;top:435px;height:17px;"><div class="t" style="left:1px;top:3px;font-size:12px;color:#727272;transform-origin:0 0;transform:scaleX(0.9190);-webkit-text-stroke:0;">0.000000</div></div>
<div style="left:847px;top:431.0px;width:21px;height:24px;border-radius:50%;background:linear-gradient(135deg,#989898 0%,#aaaaaa 55%,#d4d4d4 72%,#ffffff 88%)"></div>
<div style="left:848.6px;top:433.0px;width:17.4px;height:19.6px;border-radius:50%;background:radial-gradient(circle at 33% 28%, #8aa880 0%, #2e5a1a 20%, #214a10 55%, #0e2805 100%)"></div>
<div class="t" style="left:448.80px;top:467.00px;font-size:12px;color:#101010;transform-origin:0 0;transform:scaleX(0.9281);">Max File Size (Bytes)</div>
<div style="left:448px;top:481px;width:91px;height:24px"><div class="f" style="border-style:solid;border-width:1px 1px 1px 1px;border-color:#b0b0b0 #c4c4c4 #c0c0c0 #b0b0b0"><div class="f" style="border-style:solid;border-width:1px 1px 1px 1px;border-color:#a4a4a4 #c0c0c0 #bcbcbc #a4a4a4"><div class="f" style="border-style:solid;border-width:1px 1px 1px 1px;border-color:#989898 #bcbcbc #b8b8b8 #989898"><div class="f" style="border-style:solid;border-width:1px 1px 0 1px;border-color:#8c8c8c #b8b8b8 transparent #8c8c8c"><div class="f" style="background:#fafafa"></div></div></div></div></div></div>
<div style="left:437px;top:480px;width:11px;height:24px;border-radius:50%;box-sizing:border-box;border-width:1px;border-style:solid dotted dotted solid;border-color:#c4c4c4 #505050 #505050 #bcbcbc;background:radial-gradient(ellipse at 40% 30%, #e2e2e2 0%, #cdcdcd 50%, #b8b8b8 100%)"></div>
<svg style="left:437px;top:480px" width="11" height="24"><line x1="2" y1="11.5" x2="9" y2="11.5" stroke="#dadada" stroke-width="1"/><line x1="2" y1="12.5" x2="9" y2="12.5" stroke="#a8a8a8" stroke-width="1"/><path d="M3.5 9.0 L5.5 5.5" stroke="#3a3a3a" fill="none" stroke-width="1"/><path d="M5.5 5.5 L7.5 9.0" stroke="#e8e8e8" fill="none" stroke-width="1"/><path d="M3.0 15.0 L7.0 15.0 M4.5 15.0 L5.0 18.5" stroke="#3a3a3a" fill="none" stroke-width="1"/></svg>
<div class="t" style="left:452.30px;top:488.00px;font-size:12px;color:#101010;transform-origin:0 0;transform:scaleX(0.9122);">1048576</div>
<div class="t" style="left:458.80px;top:553.00px;font-size:12px;color:#727272;transform-origin:0 0;transform:scaleX(0.9885);-webkit-text-stroke:0;">Graph History</div>
<div style="left:459px;top:567px;width:60px;height:24px"><div class="f" style="border-style:solid;border-width:1px 1px 1px 1px;border-color:#b0b0b0 #c4c4c4 #c0c0c0 #a4a4a4"><div class="f" style="border-style:solid;border-width:1px 1px 1px 1px;border-color:#a4a4a4 #c0c0c0 #bcbcbc #989898"><div class="f" style="border-style:solid;border-width:1px 1px 1px 1px;border-color:#989898 #bcbcbc #b8b8b8 #8c8c8c"><div class="f" style="border-style:solid;border-width:1px 1px 0 0;border-color:#8c8c8c #b8b8b8 transparent transparent"><div class="f" style="background:#d7d7d7"></div></div></div></div></div></div>
<div style="left:447px;top:566px;width:12px;height:24px;border-radius:50%;box-sizing:border-box;border-width:1px;border-style:solid dotted dotted solid;border-color:#c4c4c4 #8e8e8e #8e8e8e #bcbcbc;background:radial-gradient(ellipse at 40% 30%, #e2e2e2 0%, #cdcdcd 50%, #b8b8b8 100%)"></div>
<svg style="left:447px;top:566px" width="12" height="24"><line x1="2" y1="11.5" x2="10" y2="11.5" stroke="#dadada" stroke-width="1"/><line x1="2" y1="12.5" x2="10" y2="12.5" stroke="#a8a8a8" stroke-width="1"/><path d="M4.0 9.0 L6.0 5.5" stroke="#9a9a9a" fill="none" stroke-width="1"/><path d="M6.0 5.5 L8.0 9.0" stroke="#e8e8e8" fill="none" stroke-width="1"/><path d="M3.5 15.0 L7.5 15.0 M5.0 15.0 L5.5 18.5" stroke="#9a9a9a" fill="none" stroke-width="1"/></svg>
<div class="t" style="left:463.30px;top:573.00px;font-size:12px;color:#727272;transform-origin:0 0;transform:scaleX(0.9064);-webkit-text-stroke:0;">1000</div>
<div class="t" style="left:520.30px;top:573.00px;font-size:12px;color:#101010;transform-origin:0 0;transform:scaleX(0.9722);"># scans</div>
<div style="left:578px;top:466.5px;width:12px;height:11px;box-sizing:border-box;border:1px solid #000;border-radius:50%;background:#fff"></div>
<div class="t" style="left:593.90px;top:468.00px;font-size:12px;color:#101010;transform-origin:0 0;transform:scaleX(0.9577);">Disable Scaling</div>
<div class="t" style="left:687.60px;top:467.00px;font-size:9px;color:#101010;transform-origin:0 0;transform:scaleX(0.9524);-webkit-text-stroke:0.1px currentColor;">Scaling is computing intensive.&nbsp; If LJM Backlog</div>
<div class="t" style="left:691.80px;top:478.00px;font-size:9px;color:#101010;transform-origin:0 0;transform:scaleX(0.9640);-webkit-text-stroke:0.1px currentColor;">is growing, disable scaling.</div>
<div style="left:578px;top:491px;width:54px;height:25px"><div class="f" style="border-style:solid;border-width:1px 1px 1px 1px;border-color:#b0b0b0 #c4c4c4 #c4c4c4 #b0b0b0"><div class="f" style="border-style:solid;border-width:1px 1px 1px 1px;border-color:#a4a4a4 #c0c0c0 #c0c0c0 #a4a4a4"><div class="f" style="border-style:solid;border-width:1px 1px 1px 1px;border-color:#989898 #bcbcbc #bcbcbc #989898"><div class="f" style="border-style:solid;border-width:1px 1px 1px 1px;border-color:#8c8c8c #b8b8b8 #b8b8b8 #8c8c8c"><div class="f" style="background:#d7d7d7"></div></div></div></div></div></div>
<div class="t" style="left:582.80px;top:498.00px;font-size:12px;color:#101010;transform-origin:0 0;transform:scaleX(0.9600);">250</div>
<div class="t" style="left:635.30px;top:498.00px;font-size:12px;color:#101010;transform-origin:0 0;transform:scaleX(0.9204);"># Scans Read</div>
<div style="left:578px;top:516px;width:54px;height:25px"><div class="f" style="border-style:solid;border-width:1px 1px 1px 1px;border-color:#b0b0b0 #c4c4c4 #c4c4c4 #b0b0b0"><div class="f" style="border-style:solid;border-width:1px 1px 1px 1px;border-color:#a4a4a4 #c0c0c0 #c0c0c0 #a4a4a4"><div class="f" style="border-style:solid;border-width:1px 1px 1px 1px;border-color:#989898 #bcbcbc #bcbcbc #989898"><div class="f" style="border-style:solid;border-width:1px 1px 1px 1px;border-color:#8c8c8c #b8b8b8 #b8b8b8 #8c8c8c"><div class="f" style="background:#d7d7d7"></div></div></div></div></div></div>
<div class="t" style="left:582.80px;top:523.00px;font-size:12px;color:#101010;transform-origin:0 0;transform:scaleX(0.9600);">487</div>
<div class="t" style="left:635.30px;top:523.00px;font-size:12px;color:#101010;transform-origin:0 0;transform:scaleX(0.9713);">ms Per Loop</div>
<div style="left:578px;top:541px;width:54px;height:25px"><div class="f" style="border-style:solid;border-width:1px 1px 1px 1px;border-color:#b0b0b0 #c4c4c4 #c4c4c4 #b0b0b0"><div class="f" style="border-style:solid;border-width:1px 1px 1px 1px;border-color:#a4a4a4 #c0c0c0 #c0c0c0 #a4a4a4"><div class="f" style="border-style:solid;border-width:1px 1px 1px 1px;border-color:#989898 #bcbcbc #bcbcbc #989898"><div class="f" style="border-style:solid;border-width:1px 1px 1px 1px;border-color:#8c8c8c #b8b8b8 #b8b8b8 #8c8c8c"><div class="f" style="background:#d7d7d7"></div></div></div></div></div></div>
<div class="t" style="left:582.80px;top:548.00px;font-size:12px;color:#101010;transform-origin:0 0;transform:scaleX(0.9399);">50.00</div>
<div class="t" style="left:635.30px;top:548.00px;font-size:12px;color:#101010;transform-origin:0 0;transform:scaleX(0.9504);">LJMScanBacklog</div>
<div style="left:578px;top:566px;width:54px;height:25px"><div class="f" style="border-style:solid;border-width:1px 1px 1px 1px;border-color:#b0b0b0 #c4c4c4 #c4c4c4 #b0b0b0"><div class="f" style="border-style:solid;border-width:1px 1px 1px 1px;border-color:#a4a4a4 #c0c0c0 #c0c0c0 #a4a4a4"><div class="f" style="border-style:solid;border-width:1px 1px 1px 1px;border-color:#989898 #bcbcbc #bcbcbc #989898"><div class="f" style="border-style:solid;border-width:1px 1px 1px 1px;border-color:#8c8c8c #b8b8b8 #b8b8b8 #8c8c8c"><div class="f" style="background:#d7d7d7"></div></div></div></div></div></div>
<div class="t" style="left:582.80px;top:573.00px;font-size:12px;color:#101010;transform-origin:0 0;transform:scaleX(0.9514);">0.00</div>
<div class="t" style="left:635.30px;top:573.00px;font-size:12px;color:#101010;transform-origin:0 0;transform:scaleX(0.9546);">DeviceScanBacklog</div>
<div class="t" style="left:794.30px;top:511.00px;font-size:12px;color:#101010;transform-origin:0 0;transform:scaleX(1.0298);"># of iterations</div>
<div style="left:794px;top:525px;width:54px;height:24px"><div class="f" style="border-style:solid;border-width:1px 1px 1px 1px;border-color:#b0b0b0 #c4c4c4 #c0c0c0 #b0b0b0"><div class="f" style="border-style:solid;border-width:1px 1px 1px 1px;border-color:#a4a4a4 #c0c0c0 #bcbcbc #a4a4a4"><div class="f" style="border-style:solid;border-width:1px 1px 1px 1px;border-color:#989898 #bcbcbc #b8b8b8 #989898"><div class="f" style="border-style:solid;border-width:1px 1px 0 1px;border-color:#8c8c8c #b8b8b8 transparent #8c8c8c"><div class="f" style="background:#d7d7d7"></div></div></div></div></div></div>
<div class="t" style="left:798.80px;top:532.00px;font-size:12px;color:#101010;transform-origin:0 0;transform:scaleX(0.9100);">232</div>
<div class="t" style="left:23.30px;top:583.00px;font-size:9px;color:#101010;transform-origin:0 0;transform:scaleX(1.0000);-webkit-text-stroke:0.1px currentColor;">Waveform Graph</div>
<div style="left:15px;top:595px;width:776px;height:328px;background:#c2c2c2"></div>
<div style="left:15px;top:595px;width:776px;height:2px;background:linear-gradient(#dedede,#cfcfcf)"></div>
<div style="left:15px;top:597px;width:13px;height:325px;background:linear-gradient(90deg,#c8c8c8,#d6d6d6 20%,#d2d2d2 80%,#c6c6c6)"></div>
<div style="left:777px;top:597px;width:14px;height:325px;background:linear-gradient(90deg,#c6c6c6,#b8b8b8 40%,#8a8a8a 85%,#5c5c5c)"></div>
<div style="left:18px;top:922px;width:773px;height:1px;background:#8c8c8c"></div>
<div style="left:15px;top:595px;width:1px;height:328px;background:#b8b8b8"></div>
<div style="left:109px;top:604px;width:659px;height:280px;background:#505050"></div>
<div style="left:110px;top:883px;width:658px;height:1px;background:#e8e8e8"></div>
<div style="left:767px;top:605px;width:1px;height:279px;background:#e8e8e8"></div>
<svg style="left:110px;top:605px" width="657" height="278" shape-rendering="crispEdges"><rect x="0" y="0" width="657" height="278" fill="#000"/><path d="M7.5 0V278M13.5 0V278M20.5 0V278M26.5 0V278M39.5 0V278M46.5 0V278M52.5 0V278M59.5 0V278M72.5 0V278M79.5 0V278M85.5 0V278M92.5 0V278M105.5 0V278M112.5 0V278M118.5 0V278M125.5 0V278M138.5 0V278M144.5 0V278M151.5 0V278M157.5 0V278M171.5 0V278M177.5 0V278M184.5 0V278M190.5 0V278M203.5 0V278M210.5 0V278M216.5 0V278M223.5 0V278M236.5 0V278M243.5 0V278M249.5 0V278M256.5 0V278M269.5 0V278M276.5 0V278M282.5 0V278M289.5 0V278M302.5 0V278M308.5 0V278M315.5 0V278M321.5 0V278M335.5 0V278M341.5 0V278M348.5 0V278M354.5 0V278M367.5 0V278M374.5 0V278M380.5 0V278M387.5 0V278M400.5 0V278M407.5 0V278M413.5 0V278M420.5 0V278M433.5 0V278M440.5 0V278M446.5 0V278M453.5 0V278M466.5 0V278M472.5 0V278M479.5 0V278M485.5 0V278M499.5 0V278M505.5 0V278M512.5 0V278M518.5 0V278M531.5 0V278M538.5 0V278M544.5 0V278M551.5 0V278M564.5 0V278M571.5 0V278M577.5 0V278M584.5 0V278M597.5 0V278M604.5 0V278M610.5 0V278M617.5 0V278M630.5 0V278M636.5 0V278M643.5 0V278M649.5 0V278M0 5.5H657M0 9.5H657M0 14.5H657M0 18.5H657M0 28.5H657M0 32.5H657M0 37.5H657M0 42.5H657M0 51.5H657M0 55.5H657M0 60.5H657M0 65.5H657M0 74.5H657M0 78.5H657M0 83.5H657M0 88.5H657M0 97.5H657M0 102.5H657M0 106.5H657M0 111.5H657M0 120.5H657M0 125.5H657M0 129.5H657M0 134.5H657M0 143.5H657M0 148.5H657M0 152.5H657M0 157.5H657M0 166.5H657M0 171.5H657M0 175.5H657M0 180.5H657M0 189.5H657M0 194.5H657M0 199.5H657M0 203.5H657M0 212.5H657M0 217.5H657M0 222.5H657M0 226.5H657M0 235.5H657M0 240.5H657M0 245.5H657M0 249.5H657M0 259.5H657M0 263.5H657M0 268.5H657M0 272.5H657" stroke="#003c00" stroke-width="1"/><path d="M33.5 0V278M66.5 0V278M98.5 0V278M131.5 0V278M164.5 0V278M197.5 0V278M230.5 0V278M262.5 0V278M295.5 0V278M328.5 0V278M361.5 0V278M394.5 0V278M426.5 0V278M459.5 0V278M492.5 0V278M525.5 0V278M558.5 0V278M590.5 0V278M623.5 0V278M0 23.5H657M0 46.5H657M0 69.5H657M0 92.5H657M0 115.5H657M0 138.5H657M0 162.5H657M0 185.5H657M0 208.5H657M0 231.5H657M0 254.5H657" stroke="#007400" stroke-width="1"/><path d="M0 254.5H657" stroke="#ffffff" stroke-width="1"/><path d="M0 20.5H148V19.5H252V18.5H280V17.5H657" stroke="#ff4a4a" stroke-width="1" fill="none"/></svg>
<div class="t" style="right:811.00px;top:600.00px;font-size:12px;color:#101010;text-align:right;transform-origin:100% 0;transform:scaleX(0.9144);">110000.0</div>
<div style="left:103px;top:605px;width:5px;height:1px;background:#000"></div>
<div class="t" style="right:811.00px;top:623.00px;font-size:12px;color:#101010;text-align:right;transform-origin:100% 0;transform:scaleX(0.9140);">100000.0</div>
<div style="left:103px;top:628px;width:5px;height:1px;background:#000"></div>
<div class="t" style="right:811.00px;top:646.00px;font-size:12px;color:#101010;text-align:right;transform-origin:100% 0;transform:scaleX(0.9176);">90000.0</div>
<div style="left:103px;top:651px;width:5px;height:1px;background:#000"></div>
<div class="t" style="right:811.00px;top:669.00px;font-size:12px;color:#101010;text-align:right;transform-origin:100% 0;transform:scaleX(0.9176);">80000.0</div>
<div style="left:103px;top:674px;width:5px;height:1px;background:#000"></div>
<div class="t" style="right:811.00px;top:692.00px;font-size:12px;color:#101010;text-align:right;transform-origin:100% 0;transform:scaleX(0.9176);">70000.0</div>
<div style="left:103px;top:697px;width:5px;height:1px;background:#000"></div>
<div class="t" style="right:811.00px;top:715.00px;font-size:12px;color:#101010;text-align:right;transform-origin:100% 0;transform:scaleX(0.9176);">60000.0</div>
<div style="left:103px;top:720px;width:5px;height:1px;background:#000"></div>
<div class="t" style="right:811.00px;top:738.00px;font-size:12px;color:#101010;text-align:right;transform-origin:100% 0;transform:scaleX(0.9176);">50000.0</div>
<div style="left:103px;top:744px;width:5px;height:1px;background:#000"></div>
<div class="t" style="right:811.00px;top:761.00px;font-size:12px;color:#101010;text-align:right;transform-origin:100% 0;transform:scaleX(0.9176);">40000.0</div>
<div style="left:103px;top:767px;width:5px;height:1px;background:#000"></div>
<div class="t" style="right:811.00px;top:784.00px;font-size:12px;color:#101010;text-align:right;transform-origin:100% 0;transform:scaleX(0.9176);">30000.0</div>
<div style="left:103px;top:790px;width:5px;height:1px;background:#000"></div>
<div class="t" style="right:811.00px;top:807.00px;font-size:12px;color:#101010;text-align:right;transform-origin:100% 0;transform:scaleX(0.9176);">20000.0</div>
<div style="left:103px;top:813px;width:5px;height:1px;background:#000"></div>
<div class="t" style="right:811.00px;top:830.00px;font-size:12px;color:#101010;text-align:right;transform-origin:100% 0;transform:scaleX(0.9176);">10000.0</div>
<div style="left:103px;top:836px;width:5px;height:1px;background:#000"></div>
<div class="t" style="right:811.00px;top:854.00px;font-size:12px;color:#101010;text-align:right;transform-origin:100% 0;transform:scaleX(0.9619);">0.0</div>
<div style="left:103px;top:859px;width:5px;height:1px;background:#000"></div>
<div class="t" style="right:811.00px;top:877.00px;font-size:12px;color:#101010;text-align:right;transform-origin:100% 0;transform:scaleX(0.9153);">-10000.0</div>
<div style="left:103px;top:882px;width:5px;height:1px;background:#000"></div>
<div style="left:110px;top:885px;width:1px;height:5px;background:#000"></div>
<div class="t" style="left:10.00px;width:200px;top:892.00px;font-size:12px;color:#101010;text-align:center;transform-origin:50% 0;transform:scaleX(0.9719);">0.0</div>
<div style="left:143px;top:885px;width:1px;height:5px;background:#000"></div>
<div class="t" style="left:42.80px;width:200px;top:892.00px;font-size:12px;color:#101010;text-align:center;transform-origin:50% 0;transform:scaleX(0.9719);">0.1</div>
<div style="left:176px;top:885px;width:1px;height:5px;background:#000"></div>
<div class="t" style="left:75.60px;width:200px;top:892.00px;font-size:12px;color:#101010;text-align:center;transform-origin:50% 0;transform:scaleX(0.9719);">0.2</div>
<div style="left:208px;top:885px;width:1px;height:5px;background:#000"></div>
<div class="t" style="left:108.40px;width:200px;top:892.00px;font-size:12px;color:#101010;text-align:center;transform-origin:50% 0;transform:scaleX(0.9719);">0.3</div>
<div style="left:241px;top:885px;width:1px;height:5px;background:#000"></div>
<div class="t" style="left:141.20px;width:200px;top:892.00px;font-size:12px;color:#101010;text-align:center;transform-origin:50% 0;transform:scaleX(0.9719);">0.4</div>
<div style="left:274px;top:885px;width:1px;height:5px;background:#000"></div>
<div class="t" style="left:174.00px;width:200px;top:892.00px;font-size:12px;color:#101010;text-align:center;transform-origin:50% 0;transform:scaleX(0.9719);">0.5</div>
<div style="left:307px;top:885px;width:1px;height:5px;background:#000"></div>
<div class="t" style="left:206.80px;width:200px;top:892.00px;font-size:12px;color:#101010;text-align:center;transform-origin:50% 0;transform:scaleX(0.9719);">0.6</div>
<div style="left:340px;top:885px;width:1px;height:5px;background:#000"></div>
<div class="t" style="left:239.60px;width:200px;top:892.00px;font-size:12px;color:#101010;text-align:center;transform-origin:50% 0;transform:scaleX(0.9719);">0.7</div>
<div style="left:372px;top:885px;width:1px;height:5px;background:#000"></div>
<div class="t" style="left:272.40px;width:200px;top:892.00px;font-size:12px;color:#101010;text-align:center;transform-origin:50% 0;transform:scaleX(0.9719);">0.8</div>
<div style="left:405px;top:885px;width:1px;height:5px;background:#000"></div>
<div class="t" style="left:305.20px;width:200px;top:892.00px;font-size:12px;color:#101010;text-align:center;transform-origin:50% 0;transform:scaleX(0.9719);">0.9</div>
<div style="left:438px;top:885px;width:1px;height:5px;background:#000"></div>
<div class="t" style="left:338.00px;width:200px;top:892.00px;font-size:12px;color:#101010;text-align:center;transform-origin:50% 0;transform:scaleX(0.9719);">1.0</div>
<div style="left:471px;top:885px;width:1px;height:5px;background:#000"></div>
<div class="t" style="left:370.80px;width:200px;top:892.00px;font-size:12px;color:#101010;text-align:center;transform-origin:50% 0;transform:scaleX(0.9719);">1.1</div>
<div style="left:504px;top:885px;width:1px;height:5px;background:#000"></div>
<div class="t" style="left:403.60px;width:200px;top:892.00px;font-size:12px;color:#101010;text-align:center;transform-origin:50% 0;transform:scaleX(0.9719);">1.2</div>
<div style="left:536px;top:885px;width:1px;height:5px;background:#000"></div>
<div class="t" style="left:436.40px;width:200px;top:892.00px;font-size:12px;color:#101010;text-align:center;transform-origin:50% 0;transform:scaleX(0.9719);">1.3</div>
<div style="left:569px;top:885px;width:1px;height:5px;background:#000"></div>
<div class="t" style="left:469.20px;width:200px;top:892.00px;font-size:12px;color:#101010;text-align:center;transform-origin:50% 0;transform:scaleX(0.9719);">1.4</div>
<div style="left:602px;top:885px;width:1px;height:5px;background:#000"></div>
<div class="t" style="left:502.00px;width:200px;top:892.00px;font-size:12px;color:#101010;text-align:center;transform-origin:50% 0;transform:scaleX(0.9719);">1.5</div>
<div style="left:635px;top:885px;width:1px;height:5px;background:#000"></div>
<div class="t" style="left:534.80px;width:200px;top:892.00px;font-size:12px;color:#101010;text-align:center;transform-origin:50% 0;transform:scaleX(0.9719);">1.6</div>
<div style="left:668px;top:885px;width:1px;height:5px;background:#000"></div>
<div class="t" style="left:567.60px;width:200px;top:892.00px;font-size:12px;color:#101010;text-align:center;transform-origin:50% 0;transform:scaleX(0.9719);">1.7</div>
<div style="left:700px;top:885px;width:1px;height:5px;background:#000"></div>
<div class="t" style="left:600.40px;width:200px;top:892.00px;font-size:12px;color:#101010;text-align:center;transform-origin:50% 0;transform:scaleX(0.9719);">1.8</div>
<div style="left:733px;top:885px;width:1px;height:5px;background:#000"></div>
<div class="t" style="left:633.20px;width:200px;top:892.00px;font-size:12px;color:#101010;text-align:center;transform-origin:50% 0;transform:scaleX(0.9719);">1.9</div>
<div style="left:766px;top:885px;width:1px;height:5px;background:#000"></div>
<div class="t" style="left:666.00px;width:200px;top:892.00px;font-size:12px;color:#101010;text-align:center;transform-origin:50% 0;transform:scaleX(0.9719);">2.0</div>
<div class="t" style="left:418.80px;top:909.00px;font-size:12px;color:#101010;transform-origin:0 0;transform:scaleX(1.0763);">Time</div>
<div class="t" style="left:44.5px;top:745.8px;font-size:12px;color:#101010;transform:translate(-50%,-50%) rotate(-90deg) scaleX(1.05)">Amplitude</div>
<div style="left:792px;top:555px;width:94px;height:368px;background:#c4c4c4"></div>
<div style="left:792px;top:555px;width:94px;height:2px;background:linear-gradient(#dcdcdc,#cccccc)"></div>
<div style="left:792px;top:557px;width:13px;height:365px;background:linear-gradient(90deg,#c4c4c4,#d6d6d6 30%,#d0d0d0 70%,#c6c6c6)"></div>
<div style="left:870px;top:557px;width:16px;height:365px;background:linear-gradient(90deg,#cfcfcf,#c8c8c8 25%,#a0a0a0 70%,#6a6a6a)"></div>
<div style="left:794px;top:921px;width:92px;height:2px;background:#8a8a8a"></div>
<div style="left:853px;top:557px;width:17px;height:363px;background:#000"></div>
<div style="left:853px;top:557px;width:1px;height:363px;background:#303030"></div>
<div style="left:870px;top:557px;width:1px;height:364px;background:#e4e4e4"></div>
<div class="t" style="left:806.80px;top:560.00px;font-size:12px;color:#101010;transform-origin:0 0;transform:scaleX(0.9902);">Plot 0</div>
<div class="t" style="left:806.80px;top:583.00px;font-size:12px;color:#101010;transform-origin:0 0;transform:scaleX(0.9902);">Plot 1</div>
<div class="t" style="left:806.80px;top:606.00px;font-size:12px;color:#101010;transform-origin:0 0;transform:scaleX(0.9902);">Plot 2</div>
<div class="t" style="left:806.80px;top:629.00px;font-size:12px;color:#101010;transform-origin:0 0;transform:scaleX(0.9902);">Plot 3</div>
<div class="t" style="left:806.80px;top:652.00px;font-size:12px;color:#101010;transform-origin:0 0;transform:scaleX(0.9902);">Plot 4</div>
<div class="t" style="left:806.80px;top:675.00px;font-size:12px;color:#101010;transform-origin:0 0;transform:scaleX(0.9902);">Plot 5</div>
<div class="t" style="left:806.80px;top:698.00px;font-size:12px;color:#101010;transform-origin:0 0;transform:scaleX(0.9902);">Plot 6</div>
<div class="t" style="left:806.80px;top:721.00px;font-size:12px;color:#101010;transform-origin:0 0;transform:scaleX(0.9902);">Plot 7</div>
<div class="t" style="left:806.80px;top:744.00px;font-size:12px;color:#101010;transform-origin:0 0;transform:scaleX(0.9902);">Plot 8</div>
<div class="t" style="left:806.80px;top:767.00px;font-size:12px;color:#101010;transform-origin:0 0;transform:scaleX(0.9902);">Plot 9</div>
<div class="t" style="left:806.80px;top:790.00px;font-size:12px;color:#101010;transform-origin:0 0;transform:scaleX(0.9799);">Plot 10</div>
<div class="t" style="left:806.80px;top:813.00px;font-size:12px;color:#101010;transform-origin:0 0;transform:scaleX(1.0041);">Plot 11</div>
<div class="t" style="left:806.80px;top:836.00px;font-size:12px;color:#101010;transform-origin:0 0;transform:scaleX(0.9799);">Plot 12</div>
<div class="t" style="left:806.80px;top:859.00px;font-size:12px;color:#101010;transform-origin:0 0;transform:scaleX(0.9799);">Plot 13</div>
<div class="t" style="left:806.80px;top:882.00px;font-size:12px;color:#101010;transform-origin:0 0;transform:scaleX(0.9799);">Plot 14</div>
<div class="t" style="left:806.80px;top:905.00px;font-size:12px;color:#101010;transform-origin:0 0;transform:scaleX(0.9799);">Plot 15</div>
<svg style="left:853px;top:555px" width="17" height="368" shape-rendering="crispEdges"><path d="M2 15h1v1h-1zM3 14h1v1h-1zM4 13h1v1h-1zM5 12h1v1h-1zM6 11h1v1h-1zM7 10h1v1h-1zM8 9h1v1h-1zM9 8h1v1h-1zM10 7h1v1h-1zM11 6h1v1h-1zM12 5h1v1h-1zM13 6h1v1h-1zM14 7h1v1h-1zM15 8h1v1h-1z" fill="#f0f0f0"/><path d="M2 38h1v1h-1zM3 37h1v1h-1zM4 36h1v1h-1zM5 35h1v1h-1zM6 34h1v1h-1zM7 33h1v1h-1zM8 32h1v1h-1zM9 31h1v1h-1zM10 30h1v1h-1zM11 29h1v1h-1zM12 28h1v1h-1zM13 29h1v1h-1zM14 30h1v1h-1zM15 31h1v1h-1z" fill="#f04040"/><path d="M2 61h1v1h-1zM3 60h1v1h-1zM4 59h1v1h-1zM5 58h1v1h-1zM6 57h1v1h-1zM7 56h1v1h-1zM8 55h1v1h-1zM9 54h1v1h-1zM10 53h1v1h-1zM11 52h1v1h-1zM12 51h1v1h-1zM13 52h1v1h-1zM14 53h1v1h-1zM15 54h1v1h-1z" fill="#10e010"/><path d="M2 84h1v1h-1zM3 83h1v1h-1zM4 82h1v1h-1zM5 81h1v1h-1zM6 80h1v1h-1zM7 79h1v1h-1zM8 78h1v1h-1zM9 77h1v1h-1zM10 76h1v1h-1zM11 75h1v1h-1zM12 74h1v1h-1zM13 75h1v1h-1zM14 76h1v1h-1zM15 77h1v1h-1z" fill="#40a0f0"/><path d="M2 107h1v1h-1zM3 106h1v1h-1zM4 105h1v1h-1zM5 104h1v1h-1zM6 103h1v1h-1zM7 102h1v1h-1zM8 101h1v1h-1zM9 100h1v1h-1zM10 99h1v1h-1zM11 98h1v1h-1zM12 97h1v1h-1zM13 98h1v1h-1zM14 99h1v1h-1zM15 100h1v1h-1z" fill="#c8e850"/><path d="M2 130h1v1h-1zM3 129h1v1h-1zM4 128h1v1h-1zM5 127h1v1h-1zM6 126h1v1h-1zM7 125h1v1h-1zM8 124h1v1h-1zM9 123h1v1h-1zM10 122h1v1h-1zM11 121h1v1h-1zM12 120h1v1h-1zM13 121h1v1h-1zM14 122h1v1h-1zM15 123h1v1h-1z" fill="#b040f0"/><path d="M2 153h1v1h-1zM3 152h1v1h-1zM4 151h1v1h-1zM5 150h1v1h-1zM6 149h1v1h-1zM7 148h1v1h-1zM8 147h1v1h-1zM9 146h1v1h-1zM10 145h1v1h-1zM11 144h1v1h-1zM12 143h1v1h-1zM13 144h1v1h-1zM14 145h1v1h-1zM15 146h1v1h-1z" fill="#f0a020"/><path d="M2 176h1v1h-1zM3 175h1v1h-1zM4 174h1v1h-1zM5 173h1v1h-1zM6 172h1v1h-1zM7 171h1v1h-1zM8 170h1v1h-1zM9 169h1v1h-1zM10 168h1v1h-1zM11 167h1v1h-1zM12 166h1v1h-1zM13 167h1v1h-1zM14 168h1v1h-1zM15 169h1v1h-1z" fill="#4040f0"/><path d="M2 199h1v1h-1zM3 198h1v1h-1zM4 197h1v1h-1zM5 196h1v1h-1zM6 195h1v1h-1zM7 194h1v1h-1zM8 193h1v1h-1zM9 192h1v1h-1zM10 191h1v1h-1zM11 190h1v1h-1zM12 189h1v1h-1zM13 190h1v1h-1zM14 191h1v1h-1zM15 192h1v1h-1z" fill="#f040b0"/><path d="M2 222h1v1h-1zM3 221h1v1h-1zM4 220h1v1h-1zM5 219h1v1h-1zM6 218h1v1h-1zM7 217h1v1h-1zM8 216h1v1h-1zM9 215h1v1h-1zM10 214h1v1h-1zM11 213h1v1h-1zM12 212h1v1h-1zM13 213h1v1h-1zM14 214h1v1h-1zM15 215h1v1h-1z" fill="#40e0e8"/><path d="M2 245h1v1h-1zM3 244h1v1h-1zM4 243h1v1h-1zM5 242h1v1h-1zM6 241h1v1h-1zM7 240h1v1h-1zM8 239h1v1h-1zM9 238h1v1h-1zM10 237h1v1h-1zM11 236h1v1h-1zM12 235h1v1h-1zM13 236h1v1h-1zM14 237h1v1h-1zM15 238h1v1h-1z" fill="#f0f0f0"/><path d="M2 268h1v1h-1zM3 267h1v1h-1zM4 266h1v1h-1zM5 265h1v1h-1zM6 264h1v1h-1zM7 263h1v1h-1zM8 262h1v1h-1zM9 261h1v1h-1zM10 260h1v1h-1zM11 259h1v1h-1zM12 258h1v1h-1zM13 259h1v1h-1zM14 260h1v1h-1zM15 261h1v1h-1z" fill="#f04040"/><path d="M2 291h1v1h-1zM3 290h1v1h-1zM4 289h1v1h-1zM5 288h1v1h-1zM6 287h1v1h-1zM7 286h1v1h-1zM8 285h1v1h-1zM9 284h1v1h-1zM10 283h1v1h-1zM11 282h1v1h-1zM12 281h1v1h-1zM13 282h1v1h-1zM14 283h1v1h-1zM15 284h1v1h-1z" fill="#10e010"/><path d="M2 314h1v1h-1zM3 313h1v1h-1zM4 312h1v1h-1zM5 311h1v1h-1zM6 310h1v1h-1zM7 309h1v1h-1zM8 308h1v1h-1zM9 307h1v1h-1zM10 306h1v1h-1zM11 305h1v1h-1zM12 304h1v1h-1zM13 305h1v1h-1zM14 306h1v1h-1zM15 307h1v1h-1z" fill="#40a0f0"/><path d="M2 337h1v1h-1zM3 336h1v1h-1zM4 335h1v1h-1zM5 334h1v1h-1zM6 333h1v1h-1zM7 332h1v1h-1zM8 331h1v1h-1zM9 330h1v1h-1zM10 329h1v1h-1zM11 328h1v1h-1zM12 327h1v1h-1zM13 328h1v1h-1zM14 329h1v1h-1zM15 330h1v1h-1z" fill="#c8e850"/><path d="M2 360h1v1h-1zM3 359h1v1h-1zM4 358h1v1h-1zM5 357h1v1h-1zM6 356h1v1h-1zM7 355h1v1h-1zM8 354h1v1h-1zM9 353h1v1h-1zM10 352h1v1h-1zM11 351h1v1h-1zM12 350h1v1h-1zM13 351h1v1h-1zM14 352h1v1h-1zM15 353h1v1h-1z" fill="#b040f0"/></svg>
</body></html>
